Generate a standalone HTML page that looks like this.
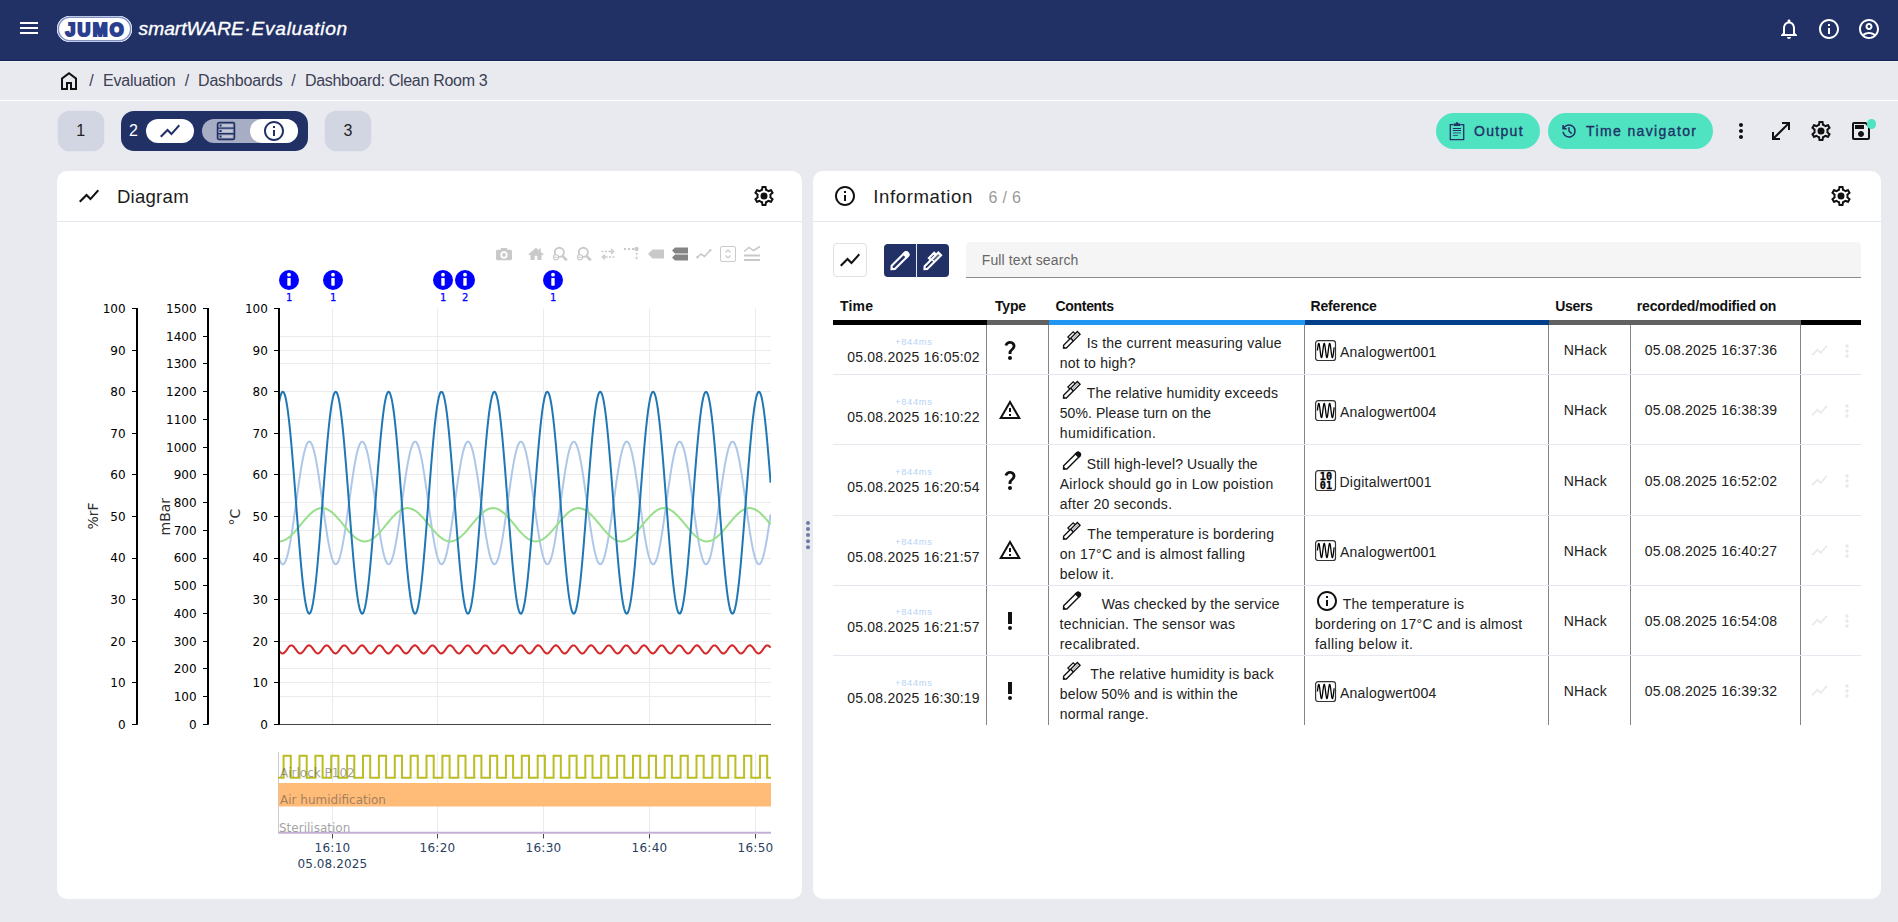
<!DOCTYPE html><html lang="en"><head><meta charset="utf-8"><title>JUMO smartWARE Evaluation - Dashboard: Clean Room 3</title>
<style>html,body{margin:0;padding:0}body{width:1898px;height:922px;overflow:hidden;background:#e9eaf0;position:relative;font-family:'Liberation Sans',sans-serif}svg{display:block;overflow:visible}</style></head><body>
<header>
<div style="position:absolute;left:0px;top:0px;width:1898px;height:60px;background:#213166;"></div>
<div style="position:absolute;left:0px;top:60px;width:1898px;height:1px;background:#15255b;"></div>
<div style="position:absolute;left:0px;top:61px;width:1898px;height:1px;background:#f0f1f6;"></div>
<svg style="position:absolute;left:17px;top:16px" width="24" height="24" viewBox="0 0 24 24" fill="#fff" ><path d="M3 18h18v-2H3v2zm0-5h18v-2H3v2zm0-7v2h18V6H3z"/></svg>
<div style="position:absolute;left:57px;top:16px;width:75px;height:26px;border-radius:13px;background:#fff;box-sizing:border-box;box-shadow:inset 0 0 0 .6px #fff, inset 0 0 0 2.1px #7f90c6"></div>
<span style="position:absolute;left:65.4px;top:17.9px;font:normal 700 17.8px/24px 'Liberation Sans',sans-serif;color:#2a3f8f;-webkit-text-stroke:2.05px #2a3f8f;white-space:pre;letter-spacing:2.3px">JUMO</span>
<span style="position:absolute;white-space:pre;left:138.60px;top:16.50px;font:italic 400 19.2px/24px 'Liberation Sans',sans-serif;color:#fff;letter-spacing:0.002px;-webkit-text-stroke:0.35px #fff;">smartWARE</span>
<span style="position:absolute;white-space:pre;left:244.20px;top:16.50px;font:italic 400 19.2px/24px 'Liberation Sans',sans-serif;color:#fff;letter-spacing:0.000px;-webkit-text-stroke:0.35px #fff;">·</span>
<span style="position:absolute;white-space:pre;left:251.60px;top:16.50px;font:italic 400 19.2px/24px 'Liberation Sans',sans-serif;color:#fff;letter-spacing:0.670px;-webkit-text-stroke:0.35px #fff;">Evaluation</span>
<svg style="position:absolute;left:1777px;top:17px" width="24" height="24" viewBox="0 0 24 24" fill="#fff" ><path d="M12 22c1.1 0 2-.9 2-2h-4c0 1.1.9 2 2 2zm6-6v-5c0-3.07-1.63-5.64-4.5-6.32V4c0-.83-.67-1.5-1.5-1.5s-1.5.67-1.5 1.5v.68C7.64 5.36 6 7.92 6 11v5l-2 2v1h16v-1l-2-2zm-2 1H8v-6c0-2.48 1.51-4.5 4-4.5s4 2.02 4 4.5v6z"/></svg>
<svg style="position:absolute;left:1817px;top:17px" width="24" height="24" viewBox="0 0 24 24" fill="#fff" ><path d="M11 7h2v2h-2zm0 4h2v6h-2zm1-9C6.48 2 2 6.48 2 12s4.48 10 10 10 10-4.48 10-10S17.52 2 12 2zm0 18c-4.41 0-8-3.59-8-8s3.59-8 8-8 8 3.59 8 8-3.59 8-8 8z"/></svg>
<svg style="position:absolute;left:1857px;top:17px" width="24" height="24" viewBox="0 0 24 24" fill="#fff" ><path d="M12 2C6.48 2 2 6.48 2 12s4.48 10 10 10 10-4.48 10-10S17.52 2 12 2zM7.35 18.5C8.66 17.56 10.26 17 12 17s3.34.56 4.65 1.5c-1.31.94-2.91 1.5-4.65 1.5s-3.34-.56-4.65-1.5zm10.79-1.38C16.45 15.8 14.32 15 12 15s-4.45.8-6.14 2.12C4.7 15.73 4 13.95 4 12c0-4.42 3.58-8 8-8s8 3.58 8 8c0 1.95-.7 3.73-1.86 5.12zM12 6c-1.93 0-3.5 1.57-3.5 3.5S10.07 13 12 13s3.5-1.57 3.5-3.5S13.93 6 12 6zm0 5c-.83 0-1.5-.67-1.5-1.5S11.17 8 12 8s1.5.67 1.5 1.5S12.83 11 12 11z"/></svg>
</header>
<nav>
<div style="position:absolute;left:0px;top:100px;width:1898px;height:1px;background:#fff;"></div>
<svg style="position:absolute;left:57px;top:69px" width="24" height="24" viewBox="0 0 24 24" fill="#111" ><path d="M6 19h3v-6h6v6h3v-9l-6-4.5L6 10v9zm-2 2V9l8-6 8 6v12h-7v-6h-2v6H4z"/></svg>
<span style="position:absolute;white-space:pre;left:89.30px;top:70.50px;font:normal 400 16px/20px 'Liberation Sans',sans-serif;color:#3b4053;letter-spacing:1.914px;">/</span>
<span style="position:absolute;white-space:pre;left:103.00px;top:70.50px;font:normal 400 16px/20px 'Liberation Sans',sans-serif;color:#3b4053;letter-spacing:-0.220px;">Evaluation</span>
<span style="position:absolute;white-space:pre;left:184.80px;top:70.50px;font:normal 400 16px/20px 'Liberation Sans',sans-serif;color:#3b4053;letter-spacing:1.914px;">/</span>
<span style="position:absolute;white-space:pre;left:198.00px;top:70.50px;font:normal 400 16px/20px 'Liberation Sans',sans-serif;color:#3b4053;letter-spacing:-0.165px;">Dashboards</span>
<span style="position:absolute;white-space:pre;left:291.30px;top:70.50px;font:normal 400 16px/20px 'Liberation Sans',sans-serif;color:#3b4053;letter-spacing:1.914px;">/</span>
<span style="position:absolute;white-space:pre;left:305.00px;top:70.50px;font:normal 400 16px/20px 'Liberation Sans',sans-serif;color:#3b4053;letter-spacing:-0.307px;">Dashboard: Clean Room 3</span>
</nav>
<section>
<div style="position:absolute;left:57.5px;top:111px;width:46.5px;height:40px;background:#d1d6e2;border-radius:12px;box-shadow:0 0 1px rgba(120,130,160,.35)"></div>
<span style="position:absolute;white-space:pre;left:76.25px;top:120.50px;font:normal 400 16px/20px 'Liberation Sans',sans-serif;color:#222;letter-spacing:0.000px;">1</span>
<div style="position:absolute;left:121px;top:111px;width:187px;height:40px;background:#213166;border-radius:13px"></div>
<span style="position:absolute;white-space:pre;left:129.05px;top:120.50px;font:normal 400 16px/20px 'Liberation Sans',sans-serif;color:#fff;letter-spacing:0.000px;">2</span>
<div style="position:absolute;left:146px;top:119px;width:48px;height:24px;background:#fff;border-radius:12px"></div>
<svg style="position:absolute;left:158px;top:119px" width="24" height="24" viewBox="0 0 24 24" fill="#213166" ><path d="M3.5 18.49l6-6.01 4 4L22 6.92l-1.41-1.41-7.09 7.97-4-4L2 16.99z"/></svg>
<div style="position:absolute;left:202px;top:119px;width:96px;height:24px;background:#a6adc4;border-radius:12px"></div>
<div style="position:absolute;left:250px;top:119px;width:48px;height:24px;background:#fff;border-radius:12px"></div>
<svg style="position:absolute;left:216px;top:121px" width="20" height="20" viewBox="0 0 20 20"><rect x="1.6" y="1.6" width="16.8" height="16.8" rx="1.5" fill="none" stroke="#213166" stroke-width="1.700"/><path d="M1.6 7.1h16.8M1.6 12.7h16.8" stroke="#213166" stroke-width="1.400"/><path d="M3.6 3.6h12.8v2H3.6zM3.6 9h12.8v2H3.6zM3.6 14.5h12.8v2H3.6z" fill="#c4c9d9"/><path d="M3.6 3.6h2v2h-2zM3.6 9h2v2h-2zM3.600 14.5h2v2h-2z" fill="#213166"/></svg>
<svg style="position:absolute;left:262px;top:119px" width="24" height="24" viewBox="0 0 24 24" fill="#213166" ><path d="M11 7h2v2h-2zm0 4h2v6h-2zm1-9C6.48 2 2 6.48 2 12s4.48 10 10 10 10-4.48 10-10S17.52 2 12 2zm0 18c-4.41 0-8-3.59-8-8s3.59-8 8-8 8 3.59 8 8-3.59 8-8 8z"/></svg>
<div style="position:absolute;left:324.5px;top:111px;width:46.5px;height:40px;background:#d1d6e2;border-radius:12px;box-shadow:0 0 1px rgba(120,130,160,.35)"></div>
<span style="position:absolute;white-space:pre;left:343.55px;top:120.50px;font:normal 400 16px/20px 'Liberation Sans',sans-serif;color:#222;letter-spacing:0.000px;">3</span>
<div style="position:absolute;left:1436px;top:113px;width:104px;height:36px;background:#50e3c2;border-radius:18px"></div>
<svg style="position:absolute;left:1448px;top:121px" width="18" height="20" viewBox="0 0 18 20" fill="none" stroke="#213166"><path d="M5.300 3.600H2.300v15h13.400v-15h-3" stroke-width="1.300"/><path d="M5.600 2.600h2.100l.5-1.300h1.600l.5 1.300h2.100v2.400H5.600z" fill="#213166" stroke="none"/><path d="M4.900 7.500h8.100M4.900 9.500h8.100" stroke-width="1"/><path d="M4.900 11.900h8.100" stroke-width="1.200" stroke="#3a6f8a"/><path d="M4.900 14.400h5.100" stroke-width="1" stroke="#2f5f85"/></svg>
<span style="position:absolute;white-space:pre;left:1474.00px;top:122.00px;font:normal 400 14px/18px 'Liberation Sans',sans-serif;color:#213166;letter-spacing:1.314px;-webkit-text-stroke:0.35px #213166;">Output</span>
<div style="position:absolute;left:1548px;top:113px;width:165px;height:36px;background:#50e3c2;border-radius:18px"></div>
<svg style="position:absolute;left:1559.8px;top:122px" width="18" height="18" viewBox="0 0 24 24" fill="#213166" ><path d="M12 21q-3.450 0-6.013-2.287Q3.425 16.425 3.050 13H5.100q.350 2.600 2.313 4.300Q9.375 19 12 19q2.925 0 4.963-2.037Q19 14.925 19 12t-2.037-4.963Q14.925 5 12 5q-1.725 0-3.225.800T6.250 8H9v2H3V4h2v2.350q1.275-1.600 3.113-2.475Q9.950 3 12 3q1.875 0 3.513.712 1.637.713 2.850 1.926 1.212 1.212 1.925 2.850Q21 10.125 21 12t-.712 3.512q-.713 1.638-1.925 2.850-1.213 1.213-2.850 1.926Q13.875 21 12 21Zm2.800-4.800L11 12.400V7h2v4.600l3.200 3.200Z"/></svg>
<span style="position:absolute;white-space:pre;left:1586.00px;top:122.00px;font:normal 400 14px/18px 'Liberation Sans',sans-serif;color:#213166;letter-spacing:1.381px;-webkit-text-stroke:0.35px #213166;">Time navigator</span>
<svg style="position:absolute;left:1729px;top:119px" width="24" height="24" viewBox="0 0 24 24" fill="#111" ><path d="M12 8c1.1 0 2-.9 2-2s-.9-2-2-2-2 .9-2 2 .9 2 2 2zm0 2c-1.1 0-2 .9-2 2s.9 2 2 2 2-.9 2-2-.9-2-2-2zm0 6c-1.1 0-2 .9-2 2s.9 2 2 2 2-.9 2-2-.9-2-2-2z"/></svg>
<svg style="position:absolute;left:1769px;top:119px" width="24" height="24" viewBox="0 0 24 24" fill="#111" ><path d="M3 21v-8h2v4.600L17.600 5H13V3h8v8h-2V6.400L6.400 19H11v2Z"/></svg>
<svg style="position:absolute;left:1809px;top:119px" width="24" height="24" viewBox="0 0 24 24" fill="#111" ><path d="M19.43 12.98c.04-.32.07-.64.07-.98 0-.34-.03-.66-.07-.98l2.11-1.65c.19-.15.24-.42.12-.64l-2-3.46c-.09-.16-.26-.25-.44-.25-.06 0-.12.01-.17.03l-2.49 1c-.52-.4-1.08-.73-1.69-.98l-.38-2.65C14.46 2.18 14.25 2 14 2h-4c-.25 0-.46.18-.49.42l-.38 2.65c-.61.25-1.17.59-1.69.98l-2.49-1c-.06-.02-.12-.03-.18-.03-.17 0-.34.09-.43.25l-2 3.46c-.13.22-.07.49.12.64l2.11 1.65c-.04.32-.07.65-.07.98 0 .33.03.66.07.98l-2.11 1.65c-.19.15-.24.42-.12.64l2 3.46c.09.16.26.25.44.25.06 0 .12-.01.17-.03l2.49-1c.52.4 1.08.73 1.69.98l.38 2.65c.03.24.24.42.49.42h4c.25 0 .46-.18.49-.42l.38-2.65c.61-.25 1.17-.59 1.69-.98l2.49 1c.06.02.12.03.18.03.17 0 .34-.09.43-.25l2-3.46c.12-.22.07-.49-.12-.64l-2.11-1.65zm-1.98-1.71c.04.31.05.52.05.73 0 .21-.02.43-.05.73l-.14 1.13.89.7 1.08.84-.7 1.21-1.27-.51-1.04-.42-.9.68c-.43.32-.84.56-1.25.73l-1.06.43-.16 1.13-.2 1.35h-1.4l-.19-1.35-.16-1.13-1.06-.43c-.43-.18-.83-.41-1.23-.71l-.91-.7-1.06.43-1.27.51-.7-1.21 1.08-.84.89-.7-.14-1.13c-.03-.31-.05-.54-.05-.74s.02-.43.05-.73l.14-1.13-.89-.7-1.08-.84.7-1.21 1.27.51 1.04.42.9-.68c.43-.32.84-.56 1.25-.73l1.06-.43.16-1.13.2-1.35h1.39l.19 1.35.16 1.13 1.06.43c.43.18.83.41 1.23.71l.91.7 1.06-.43 1.27-.51.7 1.21-1.07.85-.89.7.14 1.13zM12 8.5a3.5 3.5 0 100 7 3.5 3.5 0 000-7z"/></svg>
<svg style="position:absolute;left:1849px;top:119px" width="24" height="24" viewBox="0 0 24 24" fill="#111" ><path d="M17 3H5c-1.110 0-2 .9-2 2v14c0 1.100.890 2 2 2h14c1.100 0 2-.9 2-2V7l-4-4zm2 16H5V5h11.170L19 7.830V19zm-7-7c-1.660 0-3 1.340-3 3s1.340 3 3 3 3-1.340 3-3-1.340-3-3-3zM6 6h9v4H6z"/></svg>
<div style="position:absolute;left:1866.5px;top:119.2px;width:9.6px;height:9.6px;background:#50e3c2;border-radius:5px"></div>
</section>
<main>
<div style="position:absolute;left:57px;top:171px;width:745px;height:728px;background:#fff;border-radius:10px"></div>
<div style="position:absolute;left:57px;top:221px;width:745px;height:1px;background:#e4e6ed;"></div>
<svg style="position:absolute;left:77px;top:184px" width="24" height="24" viewBox="0 0 24 24" fill="#111" ><path d="M3.5 18.49l6-6.01 4 4L22 6.92l-1.41-1.41-7.09 7.97-4-4L2 16.99z"/></svg>
<span style="position:absolute;white-space:pre;left:116.90px;top:185.00px;font:normal 400 18.6px/23px 'Liberation Sans',sans-serif;color:#1c1c1c;letter-spacing:0.248px;">Diagram</span>
<svg style="position:absolute;left:752px;top:184px" width="24" height="24" viewBox="0 0 24 24" fill="#111" ><path d="M19.43 12.98c.04-.32.07-.64.07-.98 0-.34-.03-.66-.07-.98l2.11-1.65c.19-.15.24-.42.12-.64l-2-3.46c-.09-.16-.26-.25-.44-.25-.06 0-.12.01-.17.03l-2.49 1c-.52-.4-1.08-.73-1.69-.98l-.38-2.65C14.46 2.18 14.25 2 14 2h-4c-.25 0-.46.18-.49.42l-.38 2.65c-.61.25-1.17.59-1.69.98l-2.49-1c-.06-.02-.12-.03-.18-.03-.17 0-.34.09-.43.25l-2 3.46c-.13.22-.07.49.12.64l2.11 1.65c-.04.32-.07.65-.07.98 0 .33.03.66.07.98l-2.11 1.65c-.19.15-.24.42-.12.64l2 3.46c.09.16.26.25.44.25.06 0 .12-.01.17-.03l2.49-1c.52.4 1.08.73 1.69.98l.38 2.65c.03.24.24.42.49.42h4c.25 0 .46-.18.49-.42l.38-2.65c.61-.25 1.17-.59 1.69-.98l2.49 1c.06.02.12.03.18.03.17 0 .34-.09.43-.25l2-3.46c.12-.22.07-.49-.12-.64l-2.11-1.65zm-1.98-1.71c.04.31.05.52.05.73 0 .21-.02.43-.05.73l-.14 1.13.89.7 1.08.84-.7 1.21-1.27-.51-1.04-.42-.9.68c-.43.32-.84.56-1.25.73l-1.06.43-.16 1.13-.2 1.35h-1.4l-.19-1.35-.16-1.13-1.06-.43c-.43-.18-.83-.41-1.23-.71l-.91-.7-1.06.43-1.27.51-.7-1.21 1.08-.84.89-.7-.14-1.13c-.03-.31-.05-.54-.05-.74s.02-.43.05-.73l.14-1.13-.89-.7-1.08-.84.7-1.21 1.27.51 1.04.42.9-.68c.43-.32.84-.56 1.25-.73l1.06-.43.16-1.13.2-1.35h1.39l.19 1.35.16 1.13 1.06.43c.43.18.83.41 1.23.71l.91.7 1.06-.43 1.27-.51.7 1.21-1.07.85-.89.7.14 1.13zM12 8.5a3.5 3.5 0 100 7 3.5 3.5 0 000-7z"/></svg>
<svg style="position:absolute;left:57px;top:222px" width="745" height="677" viewBox="57 222 745 677" font-family="DejaVu Sans, Liberation Sans, sans-serif">
<defs><clipPath id="cp"><rect x="279" y="306.5" width="492" height="417.9"/></clipPath><clipPath id="cp2"><rect x="278" y="752" width="493" height="83"/></clipPath></defs>
<path d="M332.5 308.5V724.4M437.5 308.5V724.4M543.5 308.5V724.4M649.5 308.5V724.4M755.5 308.5V724.4M279 682.5H771M279 641.5H771M279 599.5H771M279 558.5H771M279 516.5H771M279 474.5H771M279 433.5H771M279 391.5H771M279 350.5H771M279 696.5H771M279 668.5H771M279 613.5H771M279 585.5H771M279 530.5H771M279 502.5H771M279 447.5H771M279 419.5H771M279 363.5H771M279 336.5H771" stroke="#ebebeb" stroke-width="1" fill="none"/>
<path d="M278.0 554.4L279.0 558.0L280.0 560.8L281.0 562.8L282.0 564.0L283.0 564.3L284.0 563.7L285.0 562.3L286.0 560.0L287.0 557.0L288.0 553.2L289.0 548.6L290.0 543.5L291.0 537.7L292.0 531.5L293.0 524.8L294.0 517.9L295.0 510.7L296.0 503.5L297.0 496.2L298.0 489.0L299.0 482.0L300.0 475.4L301.0 469.1L302.0 463.2L303.0 458.0L304.0 453.3L305.0 449.4L306.0 446.2L307.0 443.9L308.0 442.3L309.0 441.6L310.0 441.8L311.0 442.8L312.0 444.7L313.0 447.4L314.0 450.9L315.0 455.1L316.0 460.0L317.0 465.5L318.0 471.5L319.0 478.0L320.0 484.8L321.0 491.9L322.0 499.1L323.0 506.4L324.0 513.6L325.0 520.7L326.0 527.5L327.0 534.0L328.0 540.1L329.0 545.6L330.0 550.5L331.0 554.8L332.0 558.3L333.0 561.0L334.0 563.0L335.0 564.0L336.0 564.3L337.0 563.6L338.0 562.1L339.0 559.8L340.0 556.6L341.0 552.7L342.0 548.1L343.0 542.9L344.0 537.1L345.0 530.8L346.0 524.2L347.0 517.2L348.0 510.0L349.0 502.8L350.0 495.5L351.0 488.3L352.0 481.4L353.0 474.7L354.0 468.5L355.0 462.7L356.0 457.5L357.0 452.9L358.0 449.1L359.0 446.0L360.0 443.7L361.0 442.2L362.0 441.6L363.0 441.9L364.0 443.0L365.0 444.9L366.0 447.7L367.0 451.3L368.0 455.6L369.0 460.5L370.0 466.1L371.0 472.2L372.0 478.7L373.0 485.5L374.0 492.6L375.0 499.8L376.0 507.1L377.0 514.3L378.0 521.4L379.0 528.2L380.0 534.7L381.0 540.7L382.0 546.1L383.0 551.0L384.0 555.2L385.0 558.6L386.0 561.3L387.0 563.1L388.0 564.1L389.0 564.2L390.0 563.5L391.0 561.9L392.0 559.5L393.0 556.3L394.0 552.3L395.0 547.6L396.0 542.3L397.0 536.5L398.0 530.2L399.0 523.5L400.0 516.5L401.0 509.3L402.0 502.0L403.0 494.8L404.0 487.6L405.0 480.7L406.0 474.1L407.0 467.9L408.0 462.1L409.0 457.0L410.0 452.5L411.0 448.7L412.0 445.7L413.0 443.5L414.0 442.1L415.0 441.6L416.0 441.9L417.0 443.1L418.0 445.2L419.0 448.1L420.0 451.7L421.0 456.0L422.0 461.1L423.0 466.7L424.0 472.8L425.0 479.3L426.0 486.2L427.0 493.3L428.0 500.6L429.0 507.8L430.0 515.1L431.0 522.1L432.0 528.9L433.0 535.3L434.0 541.2L435.0 546.6L436.0 551.4L437.0 555.5L438.0 558.9L439.0 561.5L440.0 563.2L441.0 564.1L442.0 564.2L443.0 563.4L444.0 561.7L445.0 559.2L446.0 555.9L447.0 551.9L448.0 547.1L449.0 541.8L450.0 535.9L451.0 529.5L452.0 522.8L453.0 515.8L454.0 508.6L455.0 501.3L456.0 494.0L457.0 486.9L458.0 480.0L459.0 473.4L460.0 467.3L461.0 461.6L462.0 456.5L463.0 452.1L464.0 448.4L465.0 445.4L466.0 443.3L467.0 442.0L468.0 441.6L469.0 442.0L470.0 443.3L471.0 445.4L472.0 448.4L473.0 452.1L474.0 456.5L475.0 461.6L476.0 467.3L477.0 473.4L478.0 480.0L479.0 486.9L480.0 494.0L481.0 501.3L482.0 508.6L483.0 515.8L484.0 522.8L485.0 529.5L486.0 535.9L487.0 541.8L488.0 547.1L489.0 551.9L490.0 555.9L491.0 559.2L492.0 561.7L493.0 563.4L494.0 564.2L495.0 564.1L496.0 563.2L497.0 561.5L498.0 558.9L499.0 555.5L500.0 551.4L501.0 546.6L502.0 541.2L503.0 535.3L504.0 528.9L505.0 522.1L506.0 515.1L507.0 507.8L508.0 500.6L509.0 493.3L510.0 486.2L511.0 479.3L512.0 472.8L513.0 466.7L514.0 461.1L515.0 456.0L516.0 451.7L517.0 448.1L518.0 445.2L519.0 443.1L520.0 441.9L521.0 441.6L522.0 442.1L523.0 443.5L524.0 445.7L525.0 448.7L526.0 452.5L527.0 457.0L528.0 462.1L529.0 467.9L530.0 474.1L531.0 480.7L532.0 487.6L533.0 494.8L534.0 502.0L535.0 509.3L536.0 516.5L537.0 523.5L538.0 530.2L539.0 536.5L540.0 542.3L541.0 547.6L542.0 552.3L543.0 556.3L544.0 559.5L545.0 561.9L546.0 563.5L547.0 564.2L548.0 564.1L549.0 563.1L550.0 561.3L551.0 558.6L552.0 555.2L553.0 551.0L554.0 546.1L555.0 540.7L556.0 534.7L557.0 528.2L558.0 521.4L559.0 514.3L560.0 507.1L561.0 499.8L562.0 492.6L563.0 485.5L564.0 478.7L565.0 472.2L566.0 466.1L567.0 460.5L568.0 455.6L569.0 451.3L570.0 447.7L571.0 444.9L572.0 443.0L573.0 441.9L574.0 441.6L575.0 442.2L576.0 443.7L577.0 446.0L578.0 449.1L579.0 452.9L580.0 457.5L581.0 462.7L582.0 468.5L583.0 474.7L584.0 481.4L585.0 488.3L586.0 495.5L587.0 502.8L588.0 510.0L589.0 517.2L590.0 524.2L591.0 530.8L592.0 537.1L593.0 542.9L594.0 548.1L595.0 552.7L596.0 556.6L597.0 559.8L598.0 562.1L599.0 563.6L600.0 564.3L601.0 564.0L602.0 563.0L603.0 561.0L604.0 558.3L605.0 554.8L606.0 550.5L607.0 545.6L608.0 540.1L609.0 534.0L610.0 527.5L611.0 520.7L612.0 513.6L613.0 506.4L614.0 499.1L615.0 491.9L616.0 484.8L617.0 478.0L618.0 471.5L619.0 465.5L620.0 460.0L621.0 455.1L622.0 450.9L623.0 447.4L624.0 444.7L625.0 442.8L626.0 441.8L627.0 441.6L628.0 442.3L629.0 443.9L630.0 446.2L631.0 449.4L632.0 453.3L633.0 458.0L634.0 463.2L635.0 469.1L636.0 475.4L637.0 482.0L638.0 489.0L639.0 496.2L640.0 503.5L641.0 510.7L642.0 517.9L643.0 524.8L644.0 531.5L645.0 537.7L646.0 543.5L647.0 548.6L648.0 553.2L649.0 557.0L650.0 560.0L651.0 562.3L652.0 563.7L653.0 564.3L654.0 564.0L655.0 562.8L656.0 560.8L657.0 558.0L658.0 554.4L659.0 550.1L660.0 545.1L661.0 539.5L662.0 533.4L663.0 526.9L664.0 520.0L665.0 512.9L666.0 505.7L667.0 498.4L668.0 491.2L669.0 484.1L670.0 477.3L671.0 470.9L672.0 464.9L673.0 459.5L674.0 454.7L675.0 450.5L676.0 447.1L677.0 444.5L678.0 442.7L679.0 441.7L680.0 441.7L681.0 442.4L682.0 444.1L683.0 446.5L684.0 449.8L685.0 453.8L686.0 458.5L687.0 463.8L688.0 469.7L689.0 476.0L690.0 482.7L691.0 489.7L692.0 496.9L693.0 504.2L694.0 511.5L695.0 518.6L696.0 525.5L697.0 532.1L698.0 538.3L699.0 544.0L700.0 549.1L701.0 553.6L702.0 557.3L703.0 560.3L704.0 562.5L705.0 563.8L706.0 564.3L707.0 563.9L708.0 562.6L709.0 560.6L710.0 557.7L711.0 554.0L712.0 549.6L713.0 544.5L714.0 538.9L715.0 532.8L716.0 526.2L717.0 519.3L718.0 512.2L719.0 504.9L720.0 497.7L721.0 490.5L722.0 483.4L723.0 476.7L724.0 470.3L725.0 464.4L726.0 459.0L727.0 454.2L728.0 450.1L729.0 446.8L730.0 444.3L731.0 442.6L732.0 441.7L733.0 441.7L734.0 442.6L735.0 444.3L736.0 446.8L737.0 450.1L738.0 454.2L739.0 459.0L740.0 464.4L741.0 470.3L742.0 476.7L743.0 483.4L744.0 490.5L745.0 497.7L746.0 504.9L747.0 512.2L748.0 519.3L749.0 526.2L750.0 532.8L751.0 538.9L752.0 544.5L753.0 549.6L754.0 554.0L755.0 557.7L756.0 560.6L757.0 562.6L758.0 563.9L759.0 564.3L760.0 563.8L761.0 562.5L762.0 560.3L763.0 557.3L764.0 553.6L765.0 549.1L766.0 544.0L767.0 538.3L768.0 532.1L769.0 525.5L770.0 518.6L770.6 514.3" fill="none" stroke="#aec7e8" stroke-width="2" stroke-linejoin="round" clip-path="url(#cp)"/>
<path d="M278.0 541.3L279.0 541.4L280.0 541.4L281.0 541.3L282.0 541.1L283.0 540.8L284.0 540.4L285.0 539.9L286.0 539.4L287.0 538.8L288.0 538.1L289.0 537.3L290.0 536.5L291.0 535.6L292.0 534.6L293.0 533.6L294.0 532.6L295.0 531.5L296.0 530.3L297.0 529.1L298.0 528.0L299.0 526.7L300.0 525.5L301.0 524.3L302.0 523.1L303.0 521.9L304.0 520.7L305.0 519.5L306.0 518.4L307.0 517.3L308.0 516.2L309.0 515.2L310.0 514.2L311.0 513.3L312.0 512.4L313.0 511.6L314.0 510.9L315.0 510.3L316.0 509.7L317.0 509.2L318.0 508.8L319.0 508.5L320.0 508.3L321.0 508.2L322.0 508.1L323.0 508.2L324.0 508.3L325.0 508.5L326.0 508.8L327.0 509.2L328.0 509.7L329.0 510.3L330.0 510.9L331.0 511.6L332.0 512.4L333.0 513.3L334.0 514.2L335.0 515.2L336.0 516.2L337.0 517.3L338.0 518.4L339.0 519.5L340.0 520.7L341.0 521.9L342.0 523.1L343.0 524.3L344.0 525.5L345.0 526.7L346.0 528.0L347.0 529.1L348.0 530.3L349.0 531.5L350.0 532.6L351.0 533.6L352.0 534.6L353.0 535.6L354.0 536.5L355.0 537.3L356.0 538.1L357.0 538.8L358.0 539.4L359.0 539.9L360.0 540.4L361.0 540.8L362.0 541.1L363.0 541.3L364.0 541.4L365.0 541.4L366.0 541.3L367.0 541.2L368.0 540.9L369.0 540.6L370.0 540.2L371.0 539.7L372.0 539.1L373.0 538.4L374.0 537.7L375.0 536.9L376.0 536.0L377.0 535.1L378.0 534.1L379.0 533.1L380.0 532.0L381.0 530.9L382.0 529.7L383.0 528.6L384.0 527.4L385.0 526.1L386.0 524.9L387.0 523.7L388.0 522.5L389.0 521.3L390.0 520.1L391.0 518.9L392.0 517.8L393.0 516.7L394.0 515.7L395.0 514.7L396.0 513.7L397.0 512.8L398.0 512.0L399.0 511.3L400.0 510.6L401.0 510.0L402.0 509.5L403.0 509.0L404.0 508.7L405.0 508.4L406.0 508.2L407.0 508.1L408.0 508.1L409.0 508.2L410.0 508.4L411.0 508.7L412.0 509.0L413.0 509.5L414.0 510.0L415.0 510.6L416.0 511.3L417.0 512.0L418.0 512.8L419.0 513.7L420.0 514.7L421.0 515.7L422.0 516.7L423.0 517.8L424.0 518.9L425.0 520.1L426.0 521.3L427.0 522.5L428.0 523.7L429.0 524.9L430.0 526.1L431.0 527.4L432.0 528.6L433.0 529.7L434.0 530.9L435.0 532.0L436.0 533.1L437.0 534.1L438.0 535.1L439.0 536.0L440.0 536.9L441.0 537.7L442.0 538.4L443.0 539.1L444.0 539.7L445.0 540.2L446.0 540.6L447.0 540.9L448.0 541.2L449.0 541.3L450.0 541.4L451.0 541.4L452.0 541.3L453.0 541.1L454.0 540.8L455.0 540.4L456.0 539.9L457.0 539.4L458.0 538.8L459.0 538.1L460.0 537.3L461.0 536.5L462.0 535.6L463.0 534.6L464.0 533.6L465.0 532.6L466.0 531.5L467.0 530.3L468.0 529.1L469.0 528.0L470.0 526.7L471.0 525.5L472.0 524.3L473.0 523.1L474.0 521.9L475.0 520.7L476.0 519.5L477.0 518.4L478.0 517.3L479.0 516.2L480.0 515.2L481.0 514.2L482.0 513.3L483.0 512.4L484.0 511.6L485.0 510.9L486.0 510.3L487.0 509.7L488.0 509.2L489.0 508.8L490.0 508.5L491.0 508.3L492.0 508.2L493.0 508.1L494.0 508.2L495.0 508.3L496.0 508.5L497.0 508.8L498.0 509.2L499.0 509.7L500.0 510.3L501.0 510.9L502.0 511.6L503.0 512.4L504.0 513.3L505.0 514.2L506.0 515.2L507.0 516.2L508.0 517.3L509.0 518.4L510.0 519.5L511.0 520.7L512.0 521.9L513.0 523.1L514.0 524.3L515.0 525.5L516.0 526.7L517.0 528.0L518.0 529.1L519.0 530.3L520.0 531.5L521.0 532.6L522.0 533.6L523.0 534.6L524.0 535.6L525.0 536.5L526.0 537.3L527.0 538.1L528.0 538.8L529.0 539.4L530.0 539.9L531.0 540.4L532.0 540.8L533.0 541.1L534.0 541.3L535.0 541.4L536.0 541.4L537.0 541.3L538.0 541.2L539.0 540.9L540.0 540.6L541.0 540.2L542.0 539.7L543.0 539.1L544.0 538.4L545.0 537.7L546.0 536.9L547.0 536.0L548.0 535.1L549.0 534.1L550.0 533.1L551.0 532.0L552.0 530.9L553.0 529.7L554.0 528.6L555.0 527.4L556.0 526.1L557.0 524.9L558.0 523.7L559.0 522.5L560.0 521.3L561.0 520.1L562.0 518.9L563.0 517.8L564.0 516.7L565.0 515.7L566.0 514.7L567.0 513.7L568.0 512.8L569.0 512.0L570.0 511.3L571.0 510.6L572.0 510.0L573.0 509.5L574.0 509.0L575.0 508.7L576.0 508.4L577.0 508.2L578.0 508.1L579.0 508.1L580.0 508.2L581.0 508.4L582.0 508.7L583.0 509.0L584.0 509.5L585.0 510.0L586.0 510.6L587.0 511.3L588.0 512.0L589.0 512.8L590.0 513.7L591.0 514.7L592.0 515.7L593.0 516.7L594.0 517.8L595.0 518.9L596.0 520.1L597.0 521.3L598.0 522.5L599.0 523.7L600.0 524.9L601.0 526.1L602.0 527.4L603.0 528.6L604.0 529.7L605.0 530.9L606.0 532.0L607.0 533.1L608.0 534.1L609.0 535.1L610.0 536.0L611.0 536.9L612.0 537.7L613.0 538.4L614.0 539.1L615.0 539.7L616.0 540.2L617.0 540.6L618.0 540.9L619.0 541.2L620.0 541.3L621.0 541.4L622.0 541.4L623.0 541.3L624.0 541.1L625.0 540.8L626.0 540.4L627.0 539.9L628.0 539.4L629.0 538.8L630.0 538.1L631.0 537.3L632.0 536.5L633.0 535.6L634.0 534.6L635.0 533.6L636.0 532.6L637.0 531.5L638.0 530.3L639.0 529.1L640.0 528.0L641.0 526.7L642.0 525.5L643.0 524.3L644.0 523.1L645.0 521.9L646.0 520.7L647.0 519.5L648.0 518.4L649.0 517.3L650.0 516.2L651.0 515.2L652.0 514.2L653.0 513.3L654.0 512.4L655.0 511.6L656.0 510.9L657.0 510.3L658.0 509.7L659.0 509.2L660.0 508.8L661.0 508.5L662.0 508.3L663.0 508.2L664.0 508.1L665.0 508.2L666.0 508.3L667.0 508.5L668.0 508.8L669.0 509.2L670.0 509.7L671.0 510.3L672.0 510.9L673.0 511.6L674.0 512.4L675.0 513.3L676.0 514.2L677.0 515.2L678.0 516.2L679.0 517.3L680.0 518.4L681.0 519.5L682.0 520.7L683.0 521.9L684.0 523.1L685.0 524.3L686.0 525.5L687.0 526.7L688.0 528.0L689.0 529.1L690.0 530.3L691.0 531.5L692.0 532.6L693.0 533.6L694.0 534.6L695.0 535.6L696.0 536.5L697.0 537.3L698.0 538.1L699.0 538.8L700.0 539.4L701.0 539.9L702.0 540.4L703.0 540.8L704.0 541.1L705.0 541.3L706.0 541.4L707.0 541.4L708.0 541.3L709.0 541.2L710.0 540.9L711.0 540.6L712.0 540.2L713.0 539.7L714.0 539.1L715.0 538.4L716.0 537.7L717.0 536.9L718.0 536.0L719.0 535.1L720.0 534.1L721.0 533.1L722.0 532.0L723.0 530.9L724.0 529.7L725.0 528.6L726.0 527.4L727.0 526.1L728.0 524.9L729.0 523.7L730.0 522.5L731.0 521.3L732.0 520.1L733.0 518.9L734.0 517.8L735.0 516.7L736.0 515.7L737.0 514.7L738.0 513.7L739.0 512.8L740.0 512.0L741.0 511.3L742.0 510.6L743.0 510.0L744.0 509.5L745.0 509.0L746.0 508.7L747.0 508.4L748.0 508.2L749.0 508.1L750.0 508.1L751.0 508.2L752.0 508.4L753.0 508.7L754.0 509.0L755.0 509.5L756.0 510.0L757.0 510.6L758.0 511.3L759.0 512.0L760.0 512.8L761.0 513.7L762.0 514.7L763.0 515.7L764.0 516.7L765.0 517.8L766.0 518.9L767.0 520.1L768.0 521.3L769.0 522.5L770.0 523.7L770.6 524.4" fill="none" stroke="#98df8a" stroke-width="2" stroke-linejoin="round" clip-path="url(#cp)"/>
<path d="M278.0 409.2L279.0 402.8L280.0 397.8L281.0 394.2L282.0 392.2L283.0 391.7L284.0 392.8L285.0 395.4L286.0 399.6L287.0 405.2L288.0 412.2L289.0 420.5L290.0 429.9L291.0 440.3L292.0 451.6L293.0 463.7L294.0 476.3L295.0 489.2L296.0 502.4L297.0 515.6L298.0 528.5L299.0 541.2L300.0 553.2L301.0 564.6L302.0 575.1L303.0 584.6L304.0 592.9L305.0 599.9L306.0 605.6L307.0 609.8L308.0 612.5L309.0 613.7L310.0 613.3L311.0 611.4L312.0 607.9L313.0 602.9L314.0 596.6L315.0 588.9L316.0 580.0L317.0 570.0L318.0 559.0L319.0 547.3L320.0 534.9L321.0 522.1L322.0 509.0L323.0 495.8L324.0 482.7L325.0 469.9L326.0 457.6L327.0 445.9L328.0 435.0L329.0 425.0L330.0 416.2L331.0 408.5L332.0 402.2L333.0 397.3L334.0 393.9L335.0 392.1L336.0 391.8L337.0 393.0L338.0 395.8L339.0 400.1L340.0 405.9L341.0 413.0L342.0 421.3L343.0 430.9L344.0 441.4L345.0 452.8L346.0 464.9L347.0 477.6L348.0 490.5L349.0 503.7L350.0 516.9L351.0 529.8L352.0 542.4L353.0 554.4L354.0 565.7L355.0 576.1L356.0 585.4L357.0 593.6L358.0 600.6L359.0 606.1L360.0 610.2L361.0 612.7L362.0 613.8L363.0 613.2L364.0 611.1L365.0 607.5L366.0 602.4L367.0 595.8L368.0 588.0L369.0 579.0L370.0 568.9L371.0 557.9L372.0 546.1L373.0 533.6L374.0 520.8L375.0 507.7L376.0 494.5L377.0 481.4L378.0 468.7L379.0 456.4L380.0 444.7L381.0 433.9L382.0 424.1L383.0 415.4L384.0 407.8L385.0 401.7L386.0 396.9L387.0 393.7L388.0 392.0L389.0 391.8L390.0 393.2L391.0 396.2L392.0 400.6L393.0 406.5L394.0 413.7L395.0 422.2L396.0 431.9L397.0 442.5L398.0 454.0L399.0 466.2L400.0 478.8L401.0 491.9L402.0 505.0L403.0 518.2L404.0 531.1L405.0 543.6L406.0 555.6L407.0 566.8L408.0 577.1L409.0 586.3L410.0 594.4L411.0 601.2L412.0 606.6L413.0 610.5L414.0 612.9L415.0 613.8L416.0 613.1L417.0 610.8L418.0 607.0L419.0 601.8L420.0 595.1L421.0 587.2L422.0 578.0L423.0 567.8L424.0 556.7L425.0 544.8L426.0 532.4L427.0 519.5L428.0 506.4L429.0 493.2L430.0 480.1L431.0 467.4L432.0 455.2L433.0 443.6L434.0 432.9L435.0 423.2L436.0 414.5L437.0 407.2L438.0 401.1L439.0 396.5L440.0 393.4L441.0 391.9L442.0 391.9L443.0 393.4L444.0 396.5L445.0 401.1L446.0 407.2L447.0 414.5L448.0 423.2L449.0 432.9L450.0 443.6L451.0 455.2L452.0 467.4L453.0 480.1L454.0 493.2L455.0 506.4L456.0 519.5L457.0 532.4L458.0 544.8L459.0 556.7L460.0 567.8L461.0 578.0L462.0 587.2L463.0 595.1L464.0 601.8L465.0 607.0L466.0 610.8L467.0 613.1L468.0 613.8L469.0 612.9L470.0 610.5L471.0 606.6L472.0 601.2L473.0 594.4L474.0 586.3L475.0 577.1L476.0 566.8L477.0 555.6L478.0 543.6L479.0 531.1L480.0 518.2L481.0 505.0L482.0 491.9L483.0 478.8L484.0 466.2L485.0 454.0L486.0 442.5L487.0 431.9L488.0 422.2L489.0 413.7L490.0 406.5L491.0 400.6L492.0 396.2L493.0 393.2L494.0 391.8L495.0 392.0L496.0 393.7L497.0 396.9L498.0 401.7L499.0 407.8L500.0 415.4L501.0 424.1L502.0 433.9L503.0 444.7L504.0 456.4L505.0 468.7L506.0 481.4L507.0 494.5L508.0 507.7L509.0 520.8L510.0 533.6L511.0 546.1L512.0 557.9L513.0 568.9L514.0 579.0L515.0 588.0L516.0 595.8L517.0 602.4L518.0 607.5L519.0 611.1L520.0 613.2L521.0 613.8L522.0 612.7L523.0 610.2L524.0 606.1L525.0 600.6L526.0 593.6L527.0 585.4L528.0 576.1L529.0 565.7L530.0 554.4L531.0 542.4L532.0 529.8L533.0 516.9L534.0 503.7L535.0 490.5L536.0 477.6L537.0 464.9L538.0 452.8L539.0 441.4L540.0 430.9L541.0 421.3L542.0 413.0L543.0 405.9L544.0 400.1L545.0 395.8L546.0 393.0L547.0 391.8L548.0 392.1L549.0 393.9L550.0 397.3L551.0 402.2L552.0 408.5L553.0 416.2L554.0 425.0L555.0 435.0L556.0 445.9L557.0 457.6L558.0 469.9L559.0 482.7L560.0 495.8L561.0 509.0L562.0 522.1L563.0 534.9L564.0 547.3L565.0 559.0L566.0 570.0L567.0 580.0L568.0 588.9L569.0 596.6L570.0 602.9L571.0 607.9L572.0 611.4L573.0 613.3L574.0 613.7L575.0 612.5L576.0 609.8L577.0 605.6L578.0 599.9L579.0 592.9L580.0 584.6L581.0 575.1L582.0 564.6L583.0 553.2L584.0 541.2L585.0 528.5L586.0 515.6L587.0 502.4L588.0 489.2L589.0 476.3L590.0 463.7L591.0 451.6L592.0 440.3L593.0 429.9L594.0 420.5L595.0 412.2L596.0 405.2L597.0 399.6L598.0 395.4L599.0 392.8L600.0 391.7L601.0 392.2L602.0 394.2L603.0 397.8L604.0 402.8L605.0 409.2L606.0 417.0L607.0 426.0L608.0 436.0L609.0 447.0L610.0 458.8L611.0 471.2L612.0 484.0L613.0 497.1L614.0 510.3L615.0 523.4L616.0 536.2L617.0 548.5L618.0 560.1L619.0 571.0L620.0 580.9L621.0 589.7L622.0 597.3L623.0 603.5L624.0 608.3L625.0 611.6L626.0 613.4L627.0 613.7L628.0 612.3L629.0 609.5L630.0 605.1L631.0 599.3L632.0 592.1L633.0 583.7L634.0 574.1L635.0 563.5L636.0 552.0L637.0 539.9L638.0 527.3L639.0 514.2L640.0 501.1L641.0 487.9L642.0 475.0L643.0 462.4L644.0 450.5L645.0 439.2L646.0 428.9L647.0 419.6L648.0 411.4L649.0 404.6L650.0 399.1L651.0 395.1L652.0 392.6L653.0 391.7L654.0 392.3L655.0 394.5L656.0 398.2L657.0 403.4L658.0 410.0L659.0 417.8L660.0 426.9L661.0 437.1L662.0 448.2L663.0 460.0L664.0 472.4L665.0 485.3L666.0 498.4L667.0 511.6L668.0 524.7L669.0 537.4L670.0 549.7L671.0 561.3L672.0 572.0L673.0 581.8L674.0 590.5L675.0 597.9L676.0 604.0L677.0 608.7L678.0 611.9L679.0 613.5L680.0 613.6L681.0 612.1L682.0 609.1L683.0 604.6L684.0 598.6L685.0 591.3L686.0 582.7L687.0 573.1L688.0 562.4L689.0 550.9L690.0 538.7L691.0 526.0L692.0 512.9L693.0 499.8L694.0 486.6L695.0 473.7L696.0 461.2L697.0 449.3L698.0 438.2L699.0 427.9L700.0 418.7L701.0 410.7L702.0 404.0L703.0 398.7L704.0 394.8L705.0 392.5L706.0 391.7L707.0 392.5L708.0 394.8L709.0 398.7L710.0 404.0L711.0 410.7L712.0 418.7L713.0 427.9L714.0 438.2L715.0 449.3L716.0 461.2L717.0 473.7L718.0 486.6L719.0 499.8L720.0 512.9L721.0 526.0L722.0 538.7L723.0 550.9L724.0 562.4L725.0 573.1L726.0 582.7L727.0 591.3L728.0 598.6L729.0 604.6L730.0 609.1L731.0 612.1L732.0 613.6L733.0 613.5L734.0 611.9L735.0 608.7L736.0 604.0L737.0 597.9L738.0 590.5L739.0 581.8L740.0 572.0L741.0 561.3L742.0 549.7L743.0 537.4L744.0 524.7L745.0 511.6L746.0 498.4L747.0 485.3L748.0 472.4L749.0 460.0L750.0 448.2L751.0 437.1L752.0 426.9L753.0 417.8L754.0 410.0L755.0 403.4L756.0 398.2L757.0 394.5L758.0 392.3L759.0 391.7L760.0 392.6L761.0 395.1L762.0 399.1L763.0 404.6L764.0 411.4L765.0 419.6L766.0 428.9L767.0 439.2L768.0 450.5L769.0 462.4L770.0 475.0L770.6 482.7" fill="none" stroke="#1f77b4" stroke-width="2" stroke-linejoin="round" clip-path="url(#cp)"/>
<path d="M278.0 649.2L279.0 650.6L280.0 651.9L281.0 652.9L282.0 653.4L283.0 653.4L284.0 653.0L285.0 652.1L286.0 650.8L287.0 649.4L288.0 648.0L289.0 646.7L290.0 645.8L291.0 645.4L292.0 645.4L293.0 646.0L294.0 647.0L295.0 648.3L296.0 649.7L297.0 651.1L298.0 652.3L299.0 653.1L300.0 653.5L301.0 653.3L302.0 652.7L303.0 651.6L304.0 650.3L305.0 648.9L306.0 647.5L307.0 646.4L308.0 645.6L309.0 645.3L310.0 645.6L311.0 646.3L312.0 647.4L313.0 648.8L314.0 650.2L315.0 651.6L316.0 652.6L317.0 653.3L318.0 653.5L319.0 653.1L320.0 652.3L321.0 651.2L322.0 649.8L323.0 648.3L324.0 647.0L325.0 646.0L326.0 645.4L327.0 645.4L328.0 645.8L329.0 646.7L330.0 647.9L331.0 649.3L332.0 650.7L333.0 652.0L334.0 652.9L335.0 653.4L336.0 653.4L337.0 652.9L338.0 651.9L339.0 650.7L340.0 649.2L341.0 647.8L342.0 646.6L343.0 645.8L344.0 645.4L345.0 645.5L346.0 646.1L347.0 647.1L348.0 648.4L349.0 649.9L350.0 651.2L351.0 652.4L352.0 653.2L353.0 653.5L354.0 653.3L355.0 652.6L356.0 651.5L357.0 650.2L358.0 648.7L359.0 647.4L360.0 646.3L361.0 645.6L362.0 645.3L363.0 645.6L364.0 646.4L365.0 647.6L366.0 648.9L367.0 650.4L368.0 651.7L369.0 652.7L370.0 653.4L371.0 653.5L372.0 653.1L373.0 652.2L374.0 651.0L375.0 649.6L376.0 648.2L377.0 646.9L378.0 645.9L379.0 645.4L380.0 645.4L381.0 645.9L382.0 646.8L383.0 648.0L384.0 649.5L385.0 650.9L386.0 652.1L387.0 653.0L388.0 653.5L389.0 653.4L390.0 652.8L391.0 651.8L392.0 650.5L393.0 649.1L394.0 647.7L395.0 646.5L396.0 645.7L397.0 645.3L398.0 645.5L399.0 646.2L400.0 647.2L401.0 648.6L402.0 650.0L403.0 651.4L404.0 652.5L405.0 653.2L406.0 653.5L407.0 653.2L408.0 652.5L409.0 651.4L410.0 650.0L411.0 648.6L412.0 647.2L413.0 646.2L414.0 645.5L415.0 645.3L416.0 645.7L417.0 646.5L418.0 647.7L419.0 649.1L420.0 650.5L421.0 651.8L422.0 652.8L423.0 653.4L424.0 653.5L425.0 653.0L426.0 652.1L427.0 650.9L428.0 649.5L429.0 648.0L430.0 646.8L431.0 645.9L432.0 645.4L433.0 645.4L434.0 646.0L435.0 646.9L436.0 648.2L437.0 649.6L438.0 651.0L439.0 652.2L440.0 653.1L441.0 653.5L442.0 653.3L443.0 652.7L444.0 651.7L445.0 650.4L446.0 648.9L447.0 647.5L448.0 646.4L449.0 645.6L450.0 645.3L451.0 645.6L452.0 646.3L453.0 647.4L454.0 648.7L455.0 650.2L456.0 651.5L457.0 652.6L458.0 653.3L459.0 653.5L460.0 653.2L461.0 652.4L462.0 651.2L463.0 649.8L464.0 648.4L465.0 647.1L466.0 646.1L467.0 645.5L468.0 645.4L469.0 645.8L470.0 646.6L471.0 647.8L472.0 649.3L473.0 650.7L474.0 652.0L475.0 652.9L476.0 653.4L477.0 653.4L478.0 652.9L479.0 652.0L480.0 650.7L481.0 649.3L482.0 647.9L483.0 646.7L484.0 645.8L485.0 645.4L486.0 645.5L487.0 646.0L488.0 647.0L489.0 648.4L490.0 649.8L491.0 651.2L492.0 652.4L493.0 653.2L494.0 653.5L495.0 653.3L496.0 652.6L497.0 651.6L498.0 650.2L499.0 648.8L500.0 647.4L501.0 646.3L502.0 645.6L503.0 645.3L504.0 645.6L505.0 646.4L506.0 647.5L507.0 648.9L508.0 650.3L509.0 651.7L510.0 652.7L511.0 653.3L512.0 653.5L513.0 653.1L514.0 652.3L515.0 651.1L516.0 649.7L517.0 648.2L518.0 647.0L519.0 646.0L520.0 645.4L521.0 645.4L522.0 645.8L523.0 646.8L524.0 648.0L525.0 649.4L526.0 650.8L527.0 652.1L528.0 653.0L529.0 653.4L530.0 653.4L531.0 652.8L532.0 651.9L533.0 650.6L534.0 649.1L535.0 647.7L536.0 646.5L537.0 645.7L538.0 645.3L539.0 645.5L540.0 646.1L541.0 647.2L542.0 648.5L543.0 650.0L544.0 651.3L545.0 652.5L546.0 653.2L547.0 653.5L548.0 653.3L549.0 652.5L550.0 651.4L551.0 650.1L552.0 648.6L553.0 647.3L554.0 646.2L555.0 645.5L556.0 645.3L557.0 645.7L558.0 646.5L559.0 647.6L560.0 649.0L561.0 650.5L562.0 651.8L563.0 652.8L564.0 653.4L565.0 653.5L566.0 653.0L567.0 652.2L568.0 650.9L569.0 649.5L570.0 648.1L571.0 646.8L572.0 645.9L573.0 645.4L574.0 645.4L575.0 645.9L576.0 646.9L577.0 648.1L578.0 649.6L579.0 651.0L580.0 652.2L581.0 653.1L582.0 653.5L583.0 653.4L584.0 652.8L585.0 651.7L586.0 650.4L587.0 649.0L588.0 647.6L589.0 646.4L590.0 645.7L591.0 645.3L592.0 645.5L593.0 646.2L594.0 647.3L595.0 648.7L596.0 650.1L597.0 651.5L598.0 652.6L599.0 653.3L600.0 653.5L601.0 653.2L602.0 652.4L603.0 651.3L604.0 649.9L605.0 648.5L606.0 647.1L607.0 646.1L608.0 645.5L609.0 645.4L610.0 645.7L611.0 646.6L612.0 647.8L613.0 649.2L614.0 650.6L615.0 651.9L616.0 652.9L617.0 653.4L618.0 653.4L619.0 653.0L620.0 652.0L621.0 650.8L622.0 649.4L623.0 647.9L624.0 646.7L625.0 645.8L626.0 645.4L627.0 645.4L628.0 646.0L629.0 647.0L630.0 648.3L631.0 649.7L632.0 651.1L633.0 652.3L634.0 653.1L635.0 653.5L636.0 653.3L637.0 652.7L638.0 651.6L639.0 650.3L640.0 648.8L641.0 647.5L642.0 646.3L643.0 645.6L644.0 645.3L645.0 645.6L646.0 646.3L647.0 647.5L648.0 648.8L649.0 650.3L650.0 651.6L651.0 652.7L652.0 653.3L653.0 653.5L654.0 653.1L655.0 652.3L656.0 651.1L657.0 649.7L658.0 648.3L659.0 647.0L660.0 646.0L661.0 645.4L662.0 645.4L663.0 645.8L664.0 646.7L665.0 647.9L666.0 649.4L667.0 650.8L668.0 652.0L669.0 653.0L670.0 653.4L671.0 653.4L672.0 652.9L673.0 651.9L674.0 650.6L675.0 649.2L676.0 647.8L677.0 646.6L678.0 645.7L679.0 645.4L680.0 645.5L681.0 646.1L682.0 647.1L683.0 648.5L684.0 649.9L685.0 651.3L686.0 652.4L687.0 653.2L688.0 653.5L689.0 653.3L690.0 652.6L691.0 651.5L692.0 650.1L693.0 648.7L694.0 647.3L695.0 646.2L696.0 645.5L697.0 645.3L698.0 645.7L699.0 646.4L700.0 647.6L701.0 649.0L702.0 650.4L703.0 651.7L704.0 652.8L705.0 653.4L706.0 653.5L707.0 653.1L708.0 652.2L709.0 651.0L710.0 649.6L711.0 648.1L712.0 646.9L713.0 645.9L714.0 645.4L715.0 645.4L716.0 645.9L717.0 646.8L718.0 648.1L719.0 649.5L720.0 650.9L721.0 652.2L722.0 653.0L723.0 653.5L724.0 653.4L725.0 652.8L726.0 651.8L727.0 650.5L728.0 649.0L729.0 647.6L730.0 646.5L731.0 645.7L732.0 645.3L733.0 645.5L734.0 646.2L735.0 647.3L736.0 648.6L737.0 650.1L738.0 651.4L739.0 652.5L740.0 653.3L741.0 653.5L742.0 653.2L743.0 652.5L744.0 651.3L745.0 650.0L746.0 648.5L747.0 647.2L748.0 646.1L749.0 645.5L750.0 645.3L751.0 645.7L752.0 646.5L753.0 647.7L754.0 649.1L755.0 650.6L756.0 651.9L757.0 652.8L758.0 653.4L759.0 653.4L760.0 653.0L761.0 652.1L762.0 650.8L763.0 649.4L764.0 648.0L765.0 646.8L766.0 645.8L767.0 645.4L768.0 645.4L769.0 646.0L770.0 647.0L770.6 647.7" fill="none" stroke="#d62728" stroke-width="2" stroke-linejoin="round" clip-path="url(#cp)"/>
<path d="M278 724.5H771" stroke="#444" stroke-width="1"/>
<path d="M137 308V724.7" stroke="#000" stroke-width="2"/>
<path d="M132 724.5h5M132 682.5h5M132 641.5h5M132 599.5h5M132 558.5h5M132 516.5h5M132 474.5h5M132 433.5h5M132 391.5h5M132 350.5h5M132 308.5h5" stroke="#000" stroke-width="1"/>
<text x="125.6" y="728.8" text-anchor="end" font-size="12" fill="#000">0</text>
<text x="125.6" y="687.2" text-anchor="end" font-size="12" fill="#000">10</text>
<text x="125.6" y="645.6" text-anchor="end" font-size="12" fill="#000">20</text>
<text x="125.6" y="604.0" text-anchor="end" font-size="12" fill="#000">30</text>
<text x="125.6" y="562.4" text-anchor="end" font-size="12" fill="#000">40</text>
<text x="125.6" y="520.9" text-anchor="end" font-size="12" fill="#000">50</text>
<text x="125.6" y="479.3" text-anchor="end" font-size="12" fill="#000">60</text>
<text x="125.6" y="437.7" text-anchor="end" font-size="12" fill="#000">70</text>
<text x="125.6" y="396.1" text-anchor="end" font-size="12" fill="#000">80</text>
<text x="125.6" y="354.5" text-anchor="end" font-size="12" fill="#000">90</text>
<text x="125.6" y="312.9" text-anchor="end" font-size="12" fill="#000">100</text>
<text transform="translate(98.3,516) rotate(-90)" text-anchor="middle" font-size="14" fill="#2e2e2e">%rF</text>
<path d="M208 308V724.7" stroke="#000" stroke-width="2"/>
<path d="M203 724.5h5M203 696.5h5M203 668.5h5M203 641.5h5M203 613.5h5M203 585.5h5M203 558.5h5M203 530.5h5M203 502.5h5M203 474.5h5M203 447.5h5M203 419.5h5M203 391.5h5M203 363.5h5M203 336.5h5M203 308.5h5" stroke="#000" stroke-width="1"/>
<text x="196.6" y="728.8" text-anchor="end" font-size="12" fill="#000">0</text>
<text x="196.6" y="701.1" text-anchor="end" font-size="12" fill="#000">100</text>
<text x="196.6" y="673.3" text-anchor="end" font-size="12" fill="#000">200</text>
<text x="196.6" y="645.6" text-anchor="end" font-size="12" fill="#000">300</text>
<text x="196.6" y="617.9" text-anchor="end" font-size="12" fill="#000">400</text>
<text x="196.6" y="590.2" text-anchor="end" font-size="12" fill="#000">500</text>
<text x="196.6" y="562.4" text-anchor="end" font-size="12" fill="#000">600</text>
<text x="196.6" y="534.7" text-anchor="end" font-size="12" fill="#000">700</text>
<text x="196.6" y="507.0" text-anchor="end" font-size="12" fill="#000">800</text>
<text x="196.6" y="479.3" text-anchor="end" font-size="12" fill="#000">900</text>
<text x="196.6" y="451.5" text-anchor="end" font-size="12" fill="#000">1000</text>
<text x="196.6" y="423.8" text-anchor="end" font-size="12" fill="#000">1100</text>
<text x="196.6" y="396.1" text-anchor="end" font-size="12" fill="#000">1200</text>
<text x="196.6" y="368.4" text-anchor="end" font-size="12" fill="#000">1300</text>
<text x="196.6" y="340.6" text-anchor="end" font-size="12" fill="#000">1400</text>
<text x="196.6" y="312.9" text-anchor="end" font-size="12" fill="#000">1500</text>
<text transform="translate(169.8,516.7) rotate(-90)" text-anchor="middle" font-size="14" fill="#2e2e2e">mBar</text>
<path d="M279 308V724.7" stroke="#000" stroke-width="2"/>
<path d="M274 724.5h5M274 682.5h5M274 641.5h5M274 599.5h5M274 558.5h5M274 516.5h5M274 474.5h5M274 433.5h5M274 391.5h5M274 350.5h5M274 308.5h5" stroke="#000" stroke-width="1"/>
<text x="267.9" y="728.8" text-anchor="end" font-size="12" fill="#000">0</text>
<text x="267.9" y="687.2" text-anchor="end" font-size="12" fill="#000">10</text>
<text x="267.9" y="645.6" text-anchor="end" font-size="12" fill="#000">20</text>
<text x="267.9" y="604.0" text-anchor="end" font-size="12" fill="#000">30</text>
<text x="267.9" y="562.4" text-anchor="end" font-size="12" fill="#000">40</text>
<text x="267.9" y="520.9" text-anchor="end" font-size="12" fill="#000">50</text>
<text x="267.9" y="479.3" text-anchor="end" font-size="12" fill="#000">60</text>
<text x="267.9" y="437.7" text-anchor="end" font-size="12" fill="#000">70</text>
<text x="267.9" y="396.1" text-anchor="end" font-size="12" fill="#000">80</text>
<text x="267.9" y="354.5" text-anchor="end" font-size="12" fill="#000">90</text>
<text x="267.9" y="312.9" text-anchor="end" font-size="12" fill="#000">100</text>
<text transform="translate(240,517) rotate(-90)" text-anchor="middle" font-size="14" fill="#2e2e2e">°C</text>
<path d="M278.5 752V833" stroke="#ccc" stroke-width="1"/>
<path d="M332.5 752V833M437.5 752V833M543.5 752V833M649.5 752V833M755.5 752V833M279 777.5H771" stroke="#ebebeb" stroke-width="1" fill="none"/>
<path d="M278 777.8H283.6V755.8H290.8V777.8H299.5V755.8H306.7V777.8H315.4V755.8H322.6V777.8H331.2V755.8H338.4V777.8H347.1V755.8H354.3V777.8H363.0V755.8H370.2V777.8H378.9V755.8H386.1V777.8H394.8V755.8H402.0V777.8H410.6V755.8H417.8V777.8H426.5V755.8H433.7V777.8H442.4V755.8H449.6V777.8H458.3V755.8H465.5V777.8H474.2V755.8H481.4V777.8H490.0V755.8H497.2V777.8H505.9V755.8H513.1V777.8H521.8V755.8H529.0V777.8H537.7V755.8H544.9V777.8H553.6V755.8H560.8V777.8H569.4V755.8H576.6V777.8H585.3V755.8H592.5V777.8H601.2V755.8H608.4V777.8H617.1V755.8H624.3V777.8H633.0V755.8H640.2V777.8H648.8V755.8H656.0V777.8H664.7V755.8H671.9V777.8H680.6V755.8H687.8V777.8H696.5V755.8H703.7V777.8H712.4V755.8H719.6V777.8H728.2V755.8H735.4V777.8H744.1V755.8H751.3V777.8H760.0V755.8H767.2V777.8H775.9V755.8H783.1V777.8H773" fill="none" stroke="#bcbd22" stroke-width="2" clip-path="url(#cp2)"/>
<rect x="278.5" y="783" width="492.5" height="23.500" fill="#ffbb78"/>
<path d="M278 832.8H771" stroke="#c5b0d5" stroke-width="2"/>
<text x="280" y="776.8" font-size="12" fill="#444" fill-opacity="0.5">Airlock P102</text>
<text x="280" y="804.2" font-size="12" fill="#444" fill-opacity="0.5">Air humidification</text>
<text x="279" y="831.8" font-size="12" fill="#444" fill-opacity="0.5">Sterilisation</text>
<path d="M332.5 834v4.500M437.5 834v4.500M543.5 834v4.500M649.5 834v4.500M755.5 834v4.500" stroke="#444" stroke-width="1"/>
<text x="332.5" y="851.800" text-anchor="middle" font-size="12" letter-spacing=".28" fill="#2a3f5f">16:10</text>
<text x="437.5" y="851.800" text-anchor="middle" font-size="12" letter-spacing=".28" fill="#2a3f5f">16:20</text>
<text x="543.5" y="851.800" text-anchor="middle" font-size="12" letter-spacing=".28" fill="#2a3f5f">16:30</text>
<text x="649.5" y="851.800" text-anchor="middle" font-size="12" letter-spacing=".28" fill="#2a3f5f">16:40</text>
<text x="755.5" y="851.800" text-anchor="middle" font-size="12" letter-spacing=".28" fill="#2a3f5f">16:50</text>
<text x="332.300" y="868.400" text-anchor="middle" font-size="12" letter-spacing=".1" fill="#2a3f5f">05.08.2025</text>
<circle cx="289" cy="280" r="10" fill="#0000ff"/><circle cx="289" cy="274.700" r="1.900" fill="#fff"/><rect x="287.3" y="277.900" width="3.400" height="7.800" rx=".6" fill="#fff"/>
<text x="289.3" y="300.800" text-anchor="middle" font-size="10" fill="#0000ff" stroke="#0000ff" stroke-width=".25">1</text>
<circle cx="333" cy="280" r="10" fill="#0000ff"/><circle cx="333" cy="274.700" r="1.900" fill="#fff"/><rect x="331.3" y="277.900" width="3.400" height="7.800" rx=".6" fill="#fff"/>
<text x="333.3" y="300.800" text-anchor="middle" font-size="10" fill="#0000ff" stroke="#0000ff" stroke-width=".25">1</text>
<circle cx="443" cy="280" r="10" fill="#0000ff"/><circle cx="443" cy="274.700" r="1.900" fill="#fff"/><rect x="441.3" y="277.900" width="3.400" height="7.800" rx=".6" fill="#fff"/>
<text x="443.3" y="300.800" text-anchor="middle" font-size="10" fill="#0000ff" stroke="#0000ff" stroke-width=".25">1</text>
<circle cx="465" cy="280" r="10" fill="#0000ff"/><circle cx="465" cy="274.700" r="1.900" fill="#fff"/><rect x="463.3" y="277.900" width="3.400" height="7.800" rx=".6" fill="#fff"/>
<text x="465.3" y="300.800" text-anchor="middle" font-size="10" fill="#0000ff" stroke="#0000ff" stroke-width=".25">2</text>
<circle cx="553" cy="280" r="10" fill="#0000ff"/><circle cx="553" cy="274.700" r="1.900" fill="#fff"/><rect x="551.3" y="277.900" width="3.400" height="7.800" rx=".6" fill="#fff"/>
<text x="553.3" y="300.800" text-anchor="middle" font-size="10" fill="#0000ff" stroke="#0000ff" stroke-width=".25">1</text>
<g transform="translate(496,246)" fill="#c9c9c9" stroke="none"><path d="M1.500 3.800h2.800l.9-1.800h5.600l.9 1.800h2.800c.8 0 1.500.7 1.500 1.500v7.400c0 .8-.7 1.500-1.500 1.500h-13C.7 14.200 0 13.500 0 12.700V5.300c0-.8.700-1.500 1.500-1.500zM8 5.300a3.600 3.600 0 100 7.200 3.600 3.600 0 000-7.200zm0 1.700a1.900 1.900 0 110 3.800 1.900 1.900 0 010-3.800z" fill-rule="evenodd"/></g>
<g transform="translate(528,246)" fill="#c9c9c9" stroke="none"><path d="M8 1.800L.4 8.300l.9 1.100L2.500 8.400V14h4.200V9.800h2.600V14h4.200V8.400l1.200 1 .9-1.100L12.800 5.900V2.600h-1.700v1.900z"/></g>
<g transform="translate(552,246)" fill="#c9c9c9" stroke="none"><circle cx="7.300" cy="6.300" r="4.600" fill="none" stroke="#c9c9c9" stroke-width="1.900"/><path d="M10.300 9.800l4.500 4.500" stroke="#c9c9c9" stroke-width="2.500" fill="none"/><circle cx="4" cy="11.300" r="2.600" fill="#fff" stroke="#c9c9c9" stroke-width="1.100"/><path d="M2.300 11.300h3.400" stroke="#c9c9c9" stroke-width="1"/></g>
<g transform="translate(576,246)" fill="#c9c9c9" stroke="none"><circle cx="7.300" cy="6.300" r="4.600" fill="none" stroke="#c9c9c9" stroke-width="1.900"/><path d="M10.300 9.800l4.500 4.500" stroke="#c9c9c9" stroke-width="2.500" fill="none"/><circle cx="4" cy="11.300" r="2.600" fill="#fff" stroke="#c9c9c9" stroke-width="1.100"/><path d="M2.300 11.300h3.400" stroke="#c9c9c9" stroke-width="1"/></g>
<g transform="translate(600,246)" fill="#c9c9c9" stroke="none"><path d="M1.500 5.500h2M5 5.500h2M8.500 5.500h4M11 3l2.800 2.500L11 8M14.500 11h-2M11 11h-2M7.500 11h-4M5 8.500L2.200 11 5 13.500" fill="none" stroke="#c9c9c9" stroke-width="1.300"/></g>
<g transform="translate(624,246)" fill="#c9c9c9" stroke="none"><path d="M0 2h2v2H0zM4 2h2v2H4zM8 2h2v2H8zM11.700 6.800h1.700v2h-1.700zM11.700 10.800h1.700v2.400h-1.700z"/><circle cx="12.500" cy="3" r="2.200"/></g>
<g transform="translate(648,246)" fill="#c9c9c9" stroke="none"><path d="M0 8l4.500-4.500H16v9H4.500z"/></g>
<g transform="translate(672,246)" fill="#858585" stroke="none"><path d="M0 4.500L3 1.500h13v6H3zM0 11.500l3-3h13v6H3z"/></g>
<g transform="translate(696,246)" fill="#c9c9c9" stroke="none"><path d="M1 11.500l4-3.500 3.500 2.500L14.500 4" fill="none" stroke="#c9c9c9" stroke-width="1.600"/><circle cx="1.500" cy="11.300" r="1.200"/><circle cx="14.300" cy="4.300" r="1.200"/></g>
<g transform="translate(720,246)" fill="#c9c9c9" stroke="none"><rect x=".5" y=".5" width="15" height="15" rx="1.500" fill="none" stroke="#c9c9c9" stroke-width="1"/><path d="M5.500 6.500L8 4l2.500 2.500M5.500 9.500L8 12l2.500-2.500" fill="none" stroke="#c9c9c9" stroke-width="1.200"/></g>
<g transform="translate(744,246)" fill="#c9c9c9" stroke="none"><path d="M0 5.500l5-4 4.500 3L16 .5" fill="none" stroke="#c9c9c9" stroke-width="1.500"/><path d="M0 8.500h16v2H0zM0 13h16v2H0z"/></g>
</svg>
<svg style="position:absolute;left:804px;top:519px" width="8" height="32" viewBox="0 0 8 32" fill="#6f7ba6"><circle cx="4" cy="4" r="2"/><circle cx="4" cy="10.05" r="2"/><circle cx="4" cy="16.1" r="2"/><circle cx="4" cy="22.15" r="2"/><circle cx="4" cy="28.2" r="2"/></svg>
<div style="position:absolute;left:813px;top:171px;width:1068px;height:728px;background:#fff;border-radius:10px"></div>
<div style="position:absolute;left:813px;top:221px;width:1068px;height:1px;background:#e4e6ed;"></div>
<svg style="position:absolute;left:833.4px;top:184px" width="24" height="24" viewBox="0 0 24 24" fill="#111" ><path d="M11 7h2v2h-2zm0 4h2v6h-2zm1-9C6.48 2 2 6.48 2 12s4.48 10 10 10 10-4.48 10-10S17.52 2 12 2zm0 18c-4.41 0-8-3.59-8-8s3.59-8 8-8 8 3.59 8 8-3.59 8-8 8z"/></svg>
<span style="position:absolute;white-space:pre;left:873.30px;top:185.00px;font:normal 400 18.6px/23px 'Liberation Sans',sans-serif;color:#1c1c1c;letter-spacing:0.599px;">Information</span>
<span style="position:absolute;white-space:pre;left:988.60px;top:187.50px;font:normal 400 16px/20px 'Liberation Sans',sans-serif;color:#9a9a9a;letter-spacing:0.278px;">6 / 6</span>
<svg style="position:absolute;left:1829px;top:184px" width="24" height="24" viewBox="0 0 24 24" fill="#111" ><path d="M19.43 12.98c.04-.32.07-.64.07-.98 0-.34-.03-.66-.07-.98l2.11-1.65c.19-.15.24-.42.12-.64l-2-3.46c-.09-.16-.26-.25-.44-.25-.06 0-.12.01-.17.03l-2.49 1c-.52-.4-1.08-.73-1.69-.98l-.38-2.65C14.46 2.18 14.25 2 14 2h-4c-.25 0-.46.18-.49.42l-.38 2.65c-.61.25-1.17.59-1.69.98l-2.49-1c-.06-.02-.12-.03-.18-.03-.17 0-.34.09-.43.25l-2 3.46c-.13.22-.07.49.12.64l2.11 1.65c-.04.32-.07.65-.07.98 0 .33.03.66.07.98l-2.11 1.65c-.19.15-.24.42-.12.64l2 3.46c.09.16.26.25.44.25.06 0 .12-.01.17-.03l2.49-1c.52.4 1.08.73 1.69.98l.38 2.65c.03.24.24.42.49.42h4c.25 0 .46-.18.49-.42l.38-2.65c.61-.25 1.17-.59 1.69-.98l2.49 1c.06.02.12.03.18.03.17 0 .34-.09.43-.25l2-3.46c.12-.22.07-.49-.12-.64l-2.11-1.65zm-1.98-1.71c.04.31.05.52.05.73 0 .21-.02.43-.05.73l-.14 1.13.89.7 1.08.84-.7 1.21-1.27-.51-1.04-.42-.9.68c-.43.32-.84.56-1.25.73l-1.06.43-.16 1.13-.2 1.35h-1.4l-.19-1.35-.16-1.13-1.06-.43c-.43-.18-.83-.41-1.23-.71l-.91-.7-1.06.43-1.27.51-.7-1.21 1.08-.84.89-.7-.14-1.13c-.03-.31-.05-.54-.05-.74s.02-.43.05-.73l.14-1.13-.89-.7-1.08-.84.7-1.21 1.27.51 1.04.42.9-.68c.43-.32.84-.56 1.25-.73l1.06-.43.16-1.13.2-1.35h1.39l.19 1.35.16 1.13 1.06.43c.43.18.83.41 1.23.71l.91.7 1.06-.43 1.27-.51.7 1.21-1.07.85-.89.7.14 1.13zM12 8.5a3.5 3.5 0 100 7 3.5 3.5 0 000-7z"/></svg>
<div style="position:absolute;left:833px;top:243px;width:34px;height:34px;background:#fff;box-sizing:border-box;border:1px solid #e0e0e0;border-radius:4px"></div>
<svg style="position:absolute;left:838px;top:248px" width="24" height="24" viewBox="0 0 24 24" fill="#111" ><path d="M3.5 18.49l6-6.01 4 4L22 6.92l-1.41-1.41-7.09 7.97-4-4L2 16.99z"/></svg>
<div style="position:absolute;left:884px;top:244px;width:65px;height:33px;background:#213166;border-radius:4px"></div>
<div style="position:absolute;left:916px;top:243px;width:1px;height:35px;background:#e6e8ee;"></div>
<svg style="position:absolute;left:891.3px;top:252px" width="18" height="18" viewBox="0 0 18 18" fill="none" stroke="#fff" stroke-width="2.1" stroke-linejoin="miter"><g transform="translate(2.250,15.400) rotate(-45)"><path d="M0,-2.25 L18.15,-2.25 A2.25,2.25 0 0 1 18.15,2.25 L0,2.25 L-2.45,0 Z"/><path d="M16.800,-2.25 L18.15,-2.25 A2.25,2.25 0 0 1 18.15,2.25 L16.800,2.25 Z" fill="#fff"/><path d="M-2.45,0 L-0.800,-1.300 L-0.800,1.300 Z" fill="#fff" stroke-width=".6"/></g></svg>
<svg style="position:absolute;left:924.3px;top:252px" width="18" height="18" viewBox="0 0 18 18" fill="none" stroke="#fff" stroke-width="2.2" stroke-linejoin="miter"><g transform="translate(1.950,15.650) rotate(-45)" stroke-width="2.1"><path d="M0,-1.9 L19.5,-1.9 L19.5,1.9 L0,1.9 L-2.1,0 Z"/><path d="M-2.1,0 L-0.700,-1.200 L-0.700,1.200 Z" fill="#fff" stroke-width=".6"/><path d="M8.900,-1.9 L8.900,-4.700 L16.300,-4.700 L16.300,-1.9"/><path d="M10,-1.9 L10,1.9" stroke-width="1.500"/><path d="M10.500,0 L19.5,0" stroke-width=".7" opacity=".75"/></g></svg>
<div style="position:absolute;left:966px;top:242px;width:895px;height:36px;background:#f5f5f5;border-radius:4px 4px 0 0;box-sizing:border-box;border-bottom:1px solid #8c8c8c"></div>
<span style="position:absolute;white-space:pre;left:981.80px;top:251.00px;font:normal 400 14px/18px 'Liberation Sans',sans-serif;color:#666;letter-spacing:0.105px;">Full text search</span>
<span style="position:absolute;white-space:pre;left:840.00px;top:297.00px;font:normal 700 14px/18px 'Liberation Sans',sans-serif;color:#111;letter-spacing:0.194px;">Time</span>
<span style="position:absolute;white-space:pre;left:995.00px;top:297.00px;font:normal 700 14px/18px 'Liberation Sans',sans-serif;color:#111;letter-spacing:-0.159px;">Type</span>
<span style="position:absolute;white-space:pre;left:1055.60px;top:297.00px;font:normal 700 14px/18px 'Liberation Sans',sans-serif;color:#111;letter-spacing:-0.333px;">Contents</span>
<span style="position:absolute;white-space:pre;left:1310.60px;top:297.00px;font:normal 700 14px/18px 'Liberation Sans',sans-serif;color:#111;letter-spacing:-0.189px;">Reference</span>
<span style="position:absolute;white-space:pre;left:1555.20px;top:297.00px;font:normal 700 14px/18px 'Liberation Sans',sans-serif;color:#111;letter-spacing:-0.303px;">Users</span>
<span style="position:absolute;white-space:pre;left:1636.80px;top:297.00px;font:normal 700 14px/18px 'Liberation Sans',sans-serif;color:#111;letter-spacing:-0.186px;">recorded/modified on</span>
<div style="position:absolute;left:833px;top:320px;width:154px;height:5px;background:#000;"></div>
<div style="position:absolute;left:987px;top:320px;width:62px;height:5px;background:#616161;"></div>
<div style="position:absolute;left:1049px;top:320px;width:256px;height:5px;background:#2196f3;"></div>
<div style="position:absolute;left:1305px;top:320px;width:244px;height:5px;background:#00408b;"></div>
<div style="position:absolute;left:1549px;top:320px;width:252px;height:5px;background:#616161;"></div>
<div style="position:absolute;left:1801px;top:320px;width:60px;height:5px;background:#000;"></div>
<div style="position:absolute;left:986px;top:325px;width:1px;height:400px;background:#858585;"></div>
<div style="position:absolute;left:1048px;top:325px;width:1px;height:400px;background:#858585;"></div>
<div style="position:absolute;left:1304px;top:325px;width:1px;height:400px;background:#858585;"></div>
<div style="position:absolute;left:1548px;top:325px;width:1px;height:400px;background:#858585;"></div>
<div style="position:absolute;left:1630px;top:325px;width:1px;height:400px;background:#858585;"></div>
<div style="position:absolute;left:1800px;top:325px;width:1px;height:400px;background:#858585;"></div>
<div style="position:absolute;left:833px;top:374px;width:1028px;height:1px;background:#e6e7ef;"></div>
<div style="position:absolute;left:833px;top:444px;width:1028px;height:1px;background:#e6e7ef;"></div>
<div style="position:absolute;left:833px;top:515px;width:1028px;height:1px;background:#e6e7ef;"></div>
<div style="position:absolute;left:833px;top:585px;width:1028px;height:1px;background:#e6e7ef;"></div>
<div style="position:absolute;left:833px;top:655px;width:1028px;height:1px;background:#e6e7ef;"></div>
<span style="position:absolute;white-space:pre;left:895.08px;top:336.00px;font:normal 400 9.3px/12px 'Liberation Sans',sans-serif;color:#b6d3f5;letter-spacing:0.702px;">+844ms</span>
<span style="position:absolute;white-space:pre;left:847.24px;top:348.00px;font:normal 400 14px/18px 'Liberation Sans',sans-serif;color:#212121;letter-spacing:0.215px;">05.08.2025 16:05:02</span>
<svg style="position:absolute;left:998.3px;top:338px" width="24" height="24" viewBox="0 0 24 24" fill="#111" ><path d="M11.07 12.85c.77-1.39 2.25-2.21 3.11-3.44.91-1.29.4-3.7-2.18-3.7-1.69 0-2.52 1.28-2.87 2.34L6.54 6.96C7.25 4.83 9.18 3 11.99 3c2.35 0 3.96 1.07 4.78 2.41.7 1.15 1.11 3.3.03 4.9-1.2 1.77-2.35 2.31-2.97 3.45-.25.46-.35.76-.35 2.24h-2.89c-.01-.78-.13-2.05.48-3.15zM14 20c0 1.1-.9 2-2 2s-2-.9-2-2 .9-2 2-2 2 .9 2 2z"/></svg>
<svg style="position:absolute;left:1063px;top:331px" width="18" height="18" viewBox="0 0 18 18" fill="none" stroke="#111" stroke-width="1.4" stroke-linejoin="miter"><g transform="translate(1.950,15.650) rotate(-45)" stroke-width="1.3"><path d="M0,-1.9 L19.5,-1.9 L19.5,1.9 L0,1.9 L-2.1,0 Z"/><path d="M-2.1,0 L-0.700,-1.200 L-0.700,1.200 Z" fill="#111" stroke-width=".6"/><path d="M8.900,-1.9 L8.900,-4.700 L16.300,-4.700 L16.300,-1.9"/><path d="M10,-1.9 L10,1.9" stroke-width="1.500"/><path d="M10.500,0 L19.5,0" stroke-width=".7" opacity=".75"/></g></svg>
<span style="position:absolute;white-space:pre;left:1086.70px;top:334.00px;font:normal 400 14px/18px 'Liberation Sans',sans-serif;color:#212121;letter-spacing:0.227px;">Is the current measuring value</span>
<span style="position:absolute;white-space:pre;left:1059.70px;top:354.00px;font:normal 400 14px/18px 'Liberation Sans',sans-serif;color:#212121;letter-spacing:0.233px;">not to high?</span>
<svg style="position:absolute;left:1315px;top:340px" width="22" height="22" viewBox="0 0 22 22" fill="none"><rect x=".6" y=".6" width="19.900" height="19.900" rx="2.600" stroke="#333" stroke-width="1.200"/><path d="M2.400 10.500L2.65 8.48L2.90 6.63L3.15 5.10L3.40 4.01L3.65 3.46L3.90 3.49L4.15 4.10L4.40 5.23L4.65 6.80L4.90 8.68L5.15 10.70L5.40 12.71L5.65 14.54L5.90 16.03L6.15 17.07L6.40 17.56L6.65 17.48L6.90 16.81L7.15 15.63L7.40 14.02L7.65 12.12L7.90 10.09L8.15 8.09L8.40 6.29L8.65 4.84L8.90 3.86L9.15 3.42L9.40 3.57L9.65 4.28L9.90 5.52L10.15 7.16L10.40 9.08L10.65 11.11L10.90 13.10L11.15 14.87L11.40 16.28L11.65 17.21L11.90 17.59L12.15 17.39L12.40 16.61L12.65 15.34L12.90 13.66L13.15 11.72L13.40 9.68L13.65 7.71L13.90 5.97L14.15 4.60L14.40 3.72L14.65 3.40L14.90 3.66L15.15 4.49L15.40 5.82L15.65 7.53L15.90 9.48L16.15 11.52L16.40 13.47L16.65 15.18L16.90 16.51L17.15 17.34L17.40 17.60L17.65 17.28L17.90 16.40L18.15 15.03L18.40 13.29L18.65 11.32L18.90 9.28L19.15 7.34" stroke="#000" stroke-width="1.300" stroke-linejoin="round"/></svg>
<span style="position:absolute;white-space:pre;left:1340.00px;top:343.00px;font:normal 400 14px/18px 'Liberation Sans',sans-serif;color:#212121;letter-spacing:0.238px;">Analogwert001</span>
<span style="position:absolute;white-space:pre;left:1563.69px;top:341.00px;font:normal 400 14px/18px 'Liberation Sans',sans-serif;color:#212121;letter-spacing:0.251px;">NHack</span>
<span style="position:absolute;white-space:pre;left:1644.84px;top:341.00px;font:normal 400 14px/18px 'Liberation Sans',sans-serif;color:#212121;letter-spacing:0.215px;">05.08.2025 16:37:36</span>
<svg style="position:absolute;left:1809.8px;top:340.9px" width="19" height="19" viewBox="0 0 24 24" fill="#e8e8e8" ><path d="M3.5 18.49l6-6.01 4 4L22 6.92l-1.41-1.41-7.09 7.97-4-4L2 16.99z"/></svg>
<svg style="position:absolute;left:1836.7px;top:340.8px" width="20" height="20" viewBox="0 0 24 24" fill="#e8e8e8" ><path d="M12 8c1.1 0 2-.9 2-2s-.9-2-2-2-2 .9-2 2 .9 2 2 2zm0 2c-1.1 0-2 .9-2 2s.9 2 2 2 2-.9 2-2-.9-2-2-2zm0 6c-1.1 0-2 .9-2 2s.9 2 2 2 2-.9 2-2-.9-2-2-2z"/></svg>
<span style="position:absolute;white-space:pre;left:895.08px;top:396.00px;font:normal 400 9.3px/12px 'Liberation Sans',sans-serif;color:#b6d3f5;letter-spacing:0.702px;">+844ms</span>
<span style="position:absolute;white-space:pre;left:847.24px;top:408.00px;font:normal 400 14px/18px 'Liberation Sans',sans-serif;color:#212121;letter-spacing:0.215px;">05.08.2025 16:10:22</span>
<svg style="position:absolute;left:998.3px;top:398px" width="24" height="24" viewBox="0 0 24 24" fill="#111" ><path d="M12 5.99L19.53 19H4.47L12 5.99M12 2L1 21h22L12 2zm1 14h-2v2h2v-2zm0-6h-2v4h2v-4z"/></svg>
<svg style="position:absolute;left:1063px;top:381px" width="18" height="18" viewBox="0 0 18 18" fill="none" stroke="#111" stroke-width="1.4" stroke-linejoin="miter"><g transform="translate(1.950,15.650) rotate(-45)" stroke-width="1.3"><path d="M0,-1.9 L19.5,-1.9 L19.5,1.9 L0,1.9 L-2.1,0 Z"/><path d="M-2.1,0 L-0.700,-1.200 L-0.700,1.200 Z" fill="#111" stroke-width=".6"/><path d="M8.900,-1.9 L8.900,-4.700 L16.300,-4.700 L16.300,-1.9"/><path d="M10,-1.9 L10,1.9" stroke-width="1.500"/><path d="M10.500,0 L19.5,0" stroke-width=".7" opacity=".75"/></g></svg>
<span style="position:absolute;white-space:pre;left:1086.70px;top:384.00px;font:normal 400 14px/18px 'Liberation Sans',sans-serif;color:#212121;letter-spacing:0.216px;">The relative humidity exceeds</span>
<span style="position:absolute;white-space:pre;left:1059.70px;top:404.00px;font:normal 400 14px/18px 'Liberation Sans',sans-serif;color:#212121;letter-spacing:0.088px;">50%. Please turn on the</span>
<span style="position:absolute;white-space:pre;left:1059.70px;top:424.00px;font:normal 400 14px/18px 'Liberation Sans',sans-serif;color:#212121;letter-spacing:0.485px;">humidification.</span>
<svg style="position:absolute;left:1315px;top:400px" width="22" height="22" viewBox="0 0 22 22" fill="none"><rect x=".6" y=".6" width="19.900" height="19.900" rx="2.600" stroke="#333" stroke-width="1.200"/><path d="M2.400 10.500L2.65 8.48L2.90 6.63L3.15 5.10L3.40 4.01L3.65 3.46L3.90 3.49L4.15 4.10L4.40 5.23L4.65 6.80L4.90 8.68L5.15 10.70L5.40 12.71L5.65 14.54L5.90 16.03L6.15 17.07L6.40 17.56L6.65 17.48L6.90 16.81L7.15 15.63L7.40 14.02L7.65 12.12L7.90 10.09L8.15 8.09L8.40 6.29L8.65 4.84L8.90 3.86L9.15 3.42L9.40 3.57L9.65 4.28L9.90 5.52L10.15 7.16L10.40 9.08L10.65 11.11L10.90 13.10L11.15 14.87L11.40 16.28L11.65 17.21L11.90 17.59L12.15 17.39L12.40 16.61L12.65 15.34L12.90 13.66L13.15 11.72L13.40 9.68L13.65 7.71L13.90 5.97L14.15 4.60L14.40 3.72L14.65 3.40L14.90 3.66L15.15 4.49L15.40 5.82L15.65 7.53L15.90 9.48L16.15 11.52L16.40 13.47L16.65 15.18L16.90 16.51L17.15 17.34L17.40 17.60L17.65 17.28L17.90 16.40L18.15 15.03L18.40 13.29L18.65 11.32L18.90 9.28L19.15 7.34" stroke="#000" stroke-width="1.300" stroke-linejoin="round"/></svg>
<span style="position:absolute;white-space:pre;left:1340.00px;top:403.00px;font:normal 400 14px/18px 'Liberation Sans',sans-serif;color:#212121;letter-spacing:0.238px;">Analogwert004</span>
<span style="position:absolute;white-space:pre;left:1563.69px;top:401.00px;font:normal 400 14px/18px 'Liberation Sans',sans-serif;color:#212121;letter-spacing:0.251px;">NHack</span>
<span style="position:absolute;white-space:pre;left:1644.84px;top:401.00px;font:normal 400 14px/18px 'Liberation Sans',sans-serif;color:#212121;letter-spacing:0.215px;">05.08.2025 16:38:39</span>
<svg style="position:absolute;left:1809.8px;top:400.9px" width="19" height="19" viewBox="0 0 24 24" fill="#e8e8e8" ><path d="M3.5 18.49l6-6.01 4 4L22 6.92l-1.41-1.41-7.09 7.97-4-4L2 16.99z"/></svg>
<svg style="position:absolute;left:1836.7px;top:400.8px" width="20" height="20" viewBox="0 0 24 24" fill="#e8e8e8" ><path d="M12 8c1.1 0 2-.9 2-2s-.9-2-2-2-2 .9-2 2 .9 2 2 2zm0 2c-1.1 0-2 .9-2 2s.9 2 2 2 2-.9 2-2-.9-2-2-2zm0 6c-1.1 0-2 .9-2 2s.9 2 2 2 2-.9 2-2-.9-2-2-2z"/></svg>
<span style="position:absolute;white-space:pre;left:895.08px;top:466.00px;font:normal 400 9.3px/12px 'Liberation Sans',sans-serif;color:#b6d3f5;letter-spacing:0.702px;">+844ms</span>
<span style="position:absolute;white-space:pre;left:847.24px;top:478.00px;font:normal 400 14px/18px 'Liberation Sans',sans-serif;color:#212121;letter-spacing:0.215px;">05.08.2025 16:20:54</span>
<svg style="position:absolute;left:998.3px;top:468px" width="24" height="24" viewBox="0 0 24 24" fill="#111" ><path d="M11.07 12.85c.77-1.39 2.25-2.21 3.11-3.44.91-1.29.4-3.7-2.18-3.7-1.69 0-2.52 1.28-2.87 2.34L6.54 6.96C7.25 4.83 9.18 3 11.99 3c2.35 0 3.96 1.07 4.78 2.41.7 1.15 1.11 3.3.03 4.9-1.2 1.77-2.35 2.31-2.97 3.45-.25.46-.35.76-.35 2.24h-2.89c-.01-.78-.13-2.05.48-3.15zM14 20c0 1.1-.9 2-2 2s-2-.9-2-2 .9-2 2-2 2 .9 2 2z"/></svg>
<svg style="position:absolute;left:1063px;top:452px" width="18" height="18" viewBox="0 0 18 18" fill="none" stroke="#111" stroke-width="1.4" stroke-linejoin="miter"><g transform="translate(2.250,15.400) rotate(-45)"><path d="M0,-2.25 L18.15,-2.25 A2.25,2.25 0 0 1 18.15,2.25 L0,2.25 L-2.45,0 Z"/><path d="M16.800,-2.25 L18.15,-2.25 A2.25,2.25 0 0 1 18.15,2.25 L16.800,2.25 Z" fill="#111"/><path d="M-2.45,0 L-0.800,-1.300 L-0.800,1.300 Z" fill="#111" stroke-width=".6"/></g></svg>
<span style="position:absolute;white-space:pre;left:1086.75px;top:455.00px;font:normal 400 14px/18px 'Liberation Sans',sans-serif;color:#212121;letter-spacing:0.127px;">Still high-level? Usually the</span>
<span style="position:absolute;white-space:pre;left:1059.70px;top:475.00px;font:normal 400 14px/18px 'Liberation Sans',sans-serif;color:#212121;letter-spacing:0.325px;">Airlock should go in Low poistion</span>
<span style="position:absolute;white-space:pre;left:1059.70px;top:495.00px;font:normal 400 14px/18px 'Liberation Sans',sans-serif;color:#212121;letter-spacing:0.310px;">after 20 seconds.</span>
<svg style="position:absolute;left:1315px;top:470px" width="22" height="22" viewBox="0 0 22 22"><rect x=".6" y=".6" width="19.900" height="19.900" rx="2.600" fill="none" stroke="#333" stroke-width="1.200"/><text x="10.900" y="9.650" text-anchor="middle" font-family="DejaVu Sans Mono, DejaVu Sans, monospace" font-weight="700" font-size="10.200" fill="#000" stroke="#000" stroke-width=".3">10</text><text x="10.900" y="19.050" text-anchor="middle" font-family="DejaVu Sans Mono, DejaVu Sans, monospace" font-weight="700" font-size="10.200" fill="#000" stroke="#000" stroke-width=".3">01</text></svg>
<span style="position:absolute;white-space:pre;left:1339.40px;top:473.00px;font:normal 400 14px/18px 'Liberation Sans',sans-serif;color:#212121;letter-spacing:0.269px;">Digitalwert001</span>
<span style="position:absolute;white-space:pre;left:1563.69px;top:472.00px;font:normal 400 14px/18px 'Liberation Sans',sans-serif;color:#212121;letter-spacing:0.251px;">NHack</span>
<span style="position:absolute;white-space:pre;left:1644.84px;top:472.00px;font:normal 400 14px/18px 'Liberation Sans',sans-serif;color:#212121;letter-spacing:0.215px;">05.08.2025 16:52:02</span>
<svg style="position:absolute;left:1809.8px;top:470.85px" width="19" height="19" viewBox="0 0 24 24" fill="#e8e8e8" ><path d="M3.5 18.49l6-6.01 4 4L22 6.92l-1.41-1.41-7.09 7.97-4-4L2 16.99z"/></svg>
<svg style="position:absolute;left:1836.7px;top:470.75px" width="20" height="20" viewBox="0 0 24 24" fill="#e8e8e8" ><path d="M12 8c1.1 0 2-.9 2-2s-.9-2-2-2-2 .9-2 2 .9 2 2 2zm0 2c-1.1 0-2 .9-2 2s.9 2 2 2 2-.9 2-2-.9-2-2-2zm0 6c-1.1 0-2 .9-2 2s.9 2 2 2 2-.9 2-2-.9-2-2-2z"/></svg>
<span style="position:absolute;white-space:pre;left:895.08px;top:536.00px;font:normal 400 9.3px/12px 'Liberation Sans',sans-serif;color:#b6d3f5;letter-spacing:0.702px;">+844ms</span>
<span style="position:absolute;white-space:pre;left:847.24px;top:548.00px;font:normal 400 14px/18px 'Liberation Sans',sans-serif;color:#212121;letter-spacing:0.215px;">05.08.2025 16:21:57</span>
<svg style="position:absolute;left:998.3px;top:538px" width="24" height="24" viewBox="0 0 24 24" fill="#111" ><path d="M12 5.99L19.53 19H4.47L12 5.99M12 2L1 21h22L12 2zm1 14h-2v2h2v-2zm0-6h-2v4h2v-4z"/></svg>
<svg style="position:absolute;left:1063px;top:522px" width="18" height="18" viewBox="0 0 18 18" fill="none" stroke="#111" stroke-width="1.4" stroke-linejoin="miter"><g transform="translate(1.950,15.650) rotate(-45)" stroke-width="1.3"><path d="M0,-1.9 L19.5,-1.9 L19.5,1.9 L0,1.9 L-2.1,0 Z"/><path d="M-2.1,0 L-0.700,-1.200 L-0.700,1.200 Z" fill="#111" stroke-width=".6"/><path d="M8.900,-1.9 L8.900,-4.700 L16.300,-4.700 L16.300,-1.9"/><path d="M10,-1.9 L10,1.9" stroke-width="1.500"/><path d="M10.500,0 L19.5,0" stroke-width=".7" opacity=".75"/></g></svg>
<span style="position:absolute;white-space:pre;left:1087.20px;top:525.00px;font:normal 400 14px/18px 'Liberation Sans',sans-serif;color:#212121;letter-spacing:0.232px;">The temperature is bordering</span>
<span style="position:absolute;white-space:pre;left:1059.70px;top:545.00px;font:normal 400 14px/18px 'Liberation Sans',sans-serif;color:#212121;letter-spacing:0.278px;">on 17°C and is almost falling</span>
<span style="position:absolute;white-space:pre;left:1059.70px;top:565.00px;font:normal 400 14px/18px 'Liberation Sans',sans-serif;color:#212121;letter-spacing:0.359px;">below it.</span>
<svg style="position:absolute;left:1315px;top:540px" width="22" height="22" viewBox="0 0 22 22" fill="none"><rect x=".6" y=".6" width="19.900" height="19.900" rx="2.600" stroke="#333" stroke-width="1.200"/><path d="M2.400 10.500L2.65 8.48L2.90 6.63L3.15 5.10L3.40 4.01L3.65 3.46L3.90 3.49L4.15 4.10L4.40 5.23L4.65 6.80L4.90 8.68L5.15 10.70L5.40 12.71L5.65 14.54L5.90 16.03L6.15 17.07L6.40 17.56L6.65 17.48L6.90 16.81L7.15 15.63L7.40 14.02L7.65 12.12L7.90 10.09L8.15 8.09L8.40 6.29L8.65 4.84L8.90 3.86L9.15 3.42L9.40 3.57L9.65 4.28L9.90 5.52L10.15 7.16L10.40 9.08L10.65 11.11L10.90 13.10L11.15 14.87L11.40 16.28L11.65 17.21L11.90 17.59L12.15 17.39L12.40 16.61L12.65 15.34L12.90 13.66L13.15 11.72L13.40 9.68L13.65 7.71L13.90 5.97L14.15 4.60L14.40 3.72L14.65 3.40L14.90 3.66L15.15 4.49L15.40 5.82L15.65 7.53L15.90 9.48L16.15 11.52L16.40 13.47L16.65 15.18L16.90 16.51L17.15 17.34L17.40 17.60L17.65 17.28L17.90 16.40L18.15 15.03L18.40 13.29L18.65 11.32L18.90 9.28L19.15 7.34" stroke="#000" stroke-width="1.300" stroke-linejoin="round"/></svg>
<span style="position:absolute;white-space:pre;left:1340.00px;top:543.00px;font:normal 400 14px/18px 'Liberation Sans',sans-serif;color:#212121;letter-spacing:0.238px;">Analogwert001</span>
<span style="position:absolute;white-space:pre;left:1563.69px;top:542.00px;font:normal 400 14px/18px 'Liberation Sans',sans-serif;color:#212121;letter-spacing:0.251px;">NHack</span>
<span style="position:absolute;white-space:pre;left:1644.84px;top:542.00px;font:normal 400 14px/18px 'Liberation Sans',sans-serif;color:#212121;letter-spacing:0.215px;">05.08.2025 16:40:27</span>
<svg style="position:absolute;left:1809.8px;top:541.2px" width="19" height="19" viewBox="0 0 24 24" fill="#e8e8e8" ><path d="M3.5 18.49l6-6.01 4 4L22 6.92l-1.41-1.41-7.09 7.97-4-4L2 16.99z"/></svg>
<svg style="position:absolute;left:1836.7px;top:541.1px" width="20" height="20" viewBox="0 0 24 24" fill="#e8e8e8" ><path d="M12 8c1.1 0 2-.9 2-2s-.9-2-2-2-2 .9-2 2 .9 2 2 2zm0 2c-1.1 0-2 .9-2 2s.9 2 2 2 2-.9 2-2-.9-2-2-2zm0 6c-1.1 0-2 .9-2 2s.9 2 2 2 2-.9 2-2-.9-2-2-2z"/></svg>
<span style="position:absolute;white-space:pre;left:895.08px;top:606.00px;font:normal 400 9.3px/12px 'Liberation Sans',sans-serif;color:#b6d3f5;letter-spacing:0.702px;">+844ms</span>
<span style="position:absolute;white-space:pre;left:847.24px;top:618.00px;font:normal 400 14px/18px 'Liberation Sans',sans-serif;color:#212121;letter-spacing:0.215px;">05.08.2025 16:21:57</span>
<svg style="position:absolute;left:998.3px;top:609px" width="24" height="24" viewBox="0 0 24 24" fill="#111" ><circle cx="12" cy="19" r="2"/><path d="M10 3h4v12h-4z"/></svg>
<svg style="position:absolute;left:1063px;top:592px" width="18" height="18" viewBox="0 0 18 18" fill="none" stroke="#111" stroke-width="1.4" stroke-linejoin="miter"><g transform="translate(2.250,15.400) rotate(-45)"><path d="M0,-2.25 L18.15,-2.25 A2.25,2.25 0 0 1 18.15,2.25 L0,2.25 L-2.45,0 Z"/><path d="M16.800,-2.25 L18.15,-2.25 A2.25,2.25 0 0 1 18.15,2.25 L16.800,2.25 Z" fill="#111"/><path d="M-2.45,0 L-0.800,-1.300 L-0.800,1.300 Z" fill="#111" stroke-width=".6"/></g></svg>
<span style="position:absolute;white-space:pre;left:1101.70px;top:595.00px;font:normal 400 14px/18px 'Liberation Sans',sans-serif;color:#212121;letter-spacing:0.165px;">Was checked by the service</span>
<span style="position:absolute;white-space:pre;left:1059.50px;top:615.00px;font:normal 400 14px/18px 'Liberation Sans',sans-serif;color:#212121;letter-spacing:0.247px;">technician. The sensor was</span>
<span style="position:absolute;white-space:pre;left:1059.70px;top:635.00px;font:normal 400 14px/18px 'Liberation Sans',sans-serif;color:#212121;letter-spacing:0.272px;">recalibrated.</span>
<svg style="position:absolute;left:1315.2px;top:589px" width="24" height="24" viewBox="0 0 24 24" fill="#111" ><path d="M11 7h2v2h-2zm0 4h2v6h-2zm1-9C6.48 2 2 6.48 2 12s4.48 10 10 10 10-4.48 10-10S17.52 2 12 2zm0 18c-4.41 0-8-3.59-8-8s3.59-8 8-8 8 3.59 8 8-3.59 8-8 8z"/></svg>
<span style="position:absolute;white-space:pre;left:1342.80px;top:595.00px;font:normal 400 14px/18px 'Liberation Sans',sans-serif;color:#212121;letter-spacing:0.225px;">The temperature is</span>
<span style="position:absolute;white-space:pre;left:1315.00px;top:615.00px;font:normal 400 14px/18px 'Liberation Sans',sans-serif;color:#212121;letter-spacing:0.233px;">bordering on 17°C and is almost</span>
<span style="position:absolute;white-space:pre;left:1315.00px;top:635.00px;font:normal 400 14px/18px 'Liberation Sans',sans-serif;color:#212121;letter-spacing:0.384px;">falling below it.</span>
<span style="position:absolute;white-space:pre;left:1563.69px;top:612.00px;font:normal 400 14px/18px 'Liberation Sans',sans-serif;color:#212121;letter-spacing:0.251px;">NHack</span>
<span style="position:absolute;white-space:pre;left:1644.84px;top:612.00px;font:normal 400 14px/18px 'Liberation Sans',sans-serif;color:#212121;letter-spacing:0.215px;">05.08.2025 16:54:08</span>
<svg style="position:absolute;left:1809.8px;top:611.2px" width="19" height="19" viewBox="0 0 24 24" fill="#e8e8e8" ><path d="M3.5 18.49l6-6.01 4 4L22 6.92l-1.41-1.41-7.09 7.97-4-4L2 16.99z"/></svg>
<svg style="position:absolute;left:1836.7px;top:611.1px" width="20" height="20" viewBox="0 0 24 24" fill="#e8e8e8" ><path d="M12 8c1.1 0 2-.9 2-2s-.9-2-2-2-2 .9-2 2 .9 2 2 2zm0 2c-1.1 0-2 .9-2 2s.9 2 2 2 2-.9 2-2-.9-2-2-2zm0 6c-1.1 0-2 .9-2 2s.9 2 2 2 2-.9 2-2-.9-2-2-2z"/></svg>
<span style="position:absolute;white-space:pre;left:895.08px;top:677.00px;font:normal 400 9.3px/12px 'Liberation Sans',sans-serif;color:#b6d3f5;letter-spacing:0.702px;">+844ms</span>
<span style="position:absolute;white-space:pre;left:847.24px;top:689.00px;font:normal 400 14px/18px 'Liberation Sans',sans-serif;color:#212121;letter-spacing:0.215px;">05.08.2025 16:30:19</span>
<svg style="position:absolute;left:998.3px;top:679px" width="24" height="24" viewBox="0 0 24 24" fill="#111" ><circle cx="12" cy="19" r="2"/><path d="M10 3h4v12h-4z"/></svg>
<svg style="position:absolute;left:1063px;top:662px" width="18" height="18" viewBox="0 0 18 18" fill="none" stroke="#111" stroke-width="1.4" stroke-linejoin="miter"><g transform="translate(1.950,15.650) rotate(-45)" stroke-width="1.3"><path d="M0,-1.9 L19.5,-1.9 L19.5,1.9 L0,1.9 L-2.1,0 Z"/><path d="M-2.1,0 L-0.700,-1.200 L-0.700,1.200 Z" fill="#111" stroke-width=".6"/><path d="M8.900,-1.9 L8.900,-4.700 L16.300,-4.700 L16.300,-1.9"/><path d="M10,-1.9 L10,1.9" stroke-width="1.500"/><path d="M10.500,0 L19.5,0" stroke-width=".7" opacity=".75"/></g></svg>
<span style="position:absolute;white-space:pre;left:1090.20px;top:665.00px;font:normal 400 14px/18px 'Liberation Sans',sans-serif;color:#212121;letter-spacing:0.252px;">The relative humidity is back</span>
<span style="position:absolute;white-space:pre;left:1059.70px;top:685.00px;font:normal 400 14px/18px 'Liberation Sans',sans-serif;color:#212121;letter-spacing:0.202px;">below 50% and is within the</span>
<span style="position:absolute;white-space:pre;left:1059.70px;top:705.00px;font:normal 400 14px/18px 'Liberation Sans',sans-serif;color:#212121;letter-spacing:0.223px;">normal range.</span>
<svg style="position:absolute;left:1315px;top:681px" width="22" height="22" viewBox="0 0 22 22" fill="none"><rect x=".6" y=".6" width="19.900" height="19.900" rx="2.600" stroke="#333" stroke-width="1.200"/><path d="M2.400 10.500L2.65 8.48L2.90 6.63L3.15 5.10L3.40 4.01L3.65 3.46L3.90 3.49L4.15 4.10L4.40 5.23L4.65 6.80L4.90 8.68L5.15 10.70L5.40 12.71L5.65 14.54L5.90 16.03L6.15 17.07L6.40 17.56L6.65 17.48L6.90 16.81L7.15 15.63L7.40 14.02L7.65 12.12L7.90 10.09L8.15 8.09L8.40 6.29L8.65 4.84L8.90 3.86L9.15 3.42L9.40 3.57L9.65 4.28L9.90 5.52L10.15 7.16L10.40 9.08L10.65 11.11L10.90 13.10L11.15 14.87L11.40 16.28L11.65 17.21L11.90 17.59L12.15 17.39L12.40 16.61L12.65 15.34L12.90 13.66L13.15 11.72L13.40 9.68L13.65 7.71L13.90 5.97L14.15 4.60L14.40 3.72L14.65 3.40L14.90 3.66L15.15 4.49L15.40 5.82L15.65 7.53L15.90 9.48L16.15 11.52L16.40 13.47L16.65 15.18L16.90 16.51L17.15 17.34L17.40 17.60L17.65 17.28L17.90 16.40L18.15 15.03L18.40 13.29L18.65 11.32L18.90 9.28L19.15 7.34" stroke="#000" stroke-width="1.300" stroke-linejoin="round"/></svg>
<span style="position:absolute;white-space:pre;left:1340.00px;top:684.00px;font:normal 400 14px/18px 'Liberation Sans',sans-serif;color:#212121;letter-spacing:0.238px;">Analogwert004</span>
<span style="position:absolute;white-space:pre;left:1563.69px;top:682.00px;font:normal 400 14px/18px 'Liberation Sans',sans-serif;color:#212121;letter-spacing:0.251px;">NHack</span>
<span style="position:absolute;white-space:pre;left:1644.84px;top:682.00px;font:normal 400 14px/18px 'Liberation Sans',sans-serif;color:#212121;letter-spacing:0.215px;">05.08.2025 16:39:32</span>
<svg style="position:absolute;left:1809.8px;top:681.4px" width="19" height="19" viewBox="0 0 24 24" fill="#e8e8e8" ><path d="M3.5 18.49l6-6.01 4 4L22 6.92l-1.41-1.41-7.09 7.97-4-4L2 16.99z"/></svg>
<svg style="position:absolute;left:1836.7px;top:681.3px" width="20" height="20" viewBox="0 0 24 24" fill="#e8e8e8" ><path d="M12 8c1.1 0 2-.9 2-2s-.9-2-2-2-2 .9-2 2 .9 2 2 2zm0 2c-1.1 0-2 .9-2 2s.9 2 2 2 2-.9 2-2-.9-2-2-2zm0 6c-1.1 0-2 .9-2 2s.9 2 2 2 2-.9 2-2-.9-2-2-2z"/></svg>
</main>
</body></html>
